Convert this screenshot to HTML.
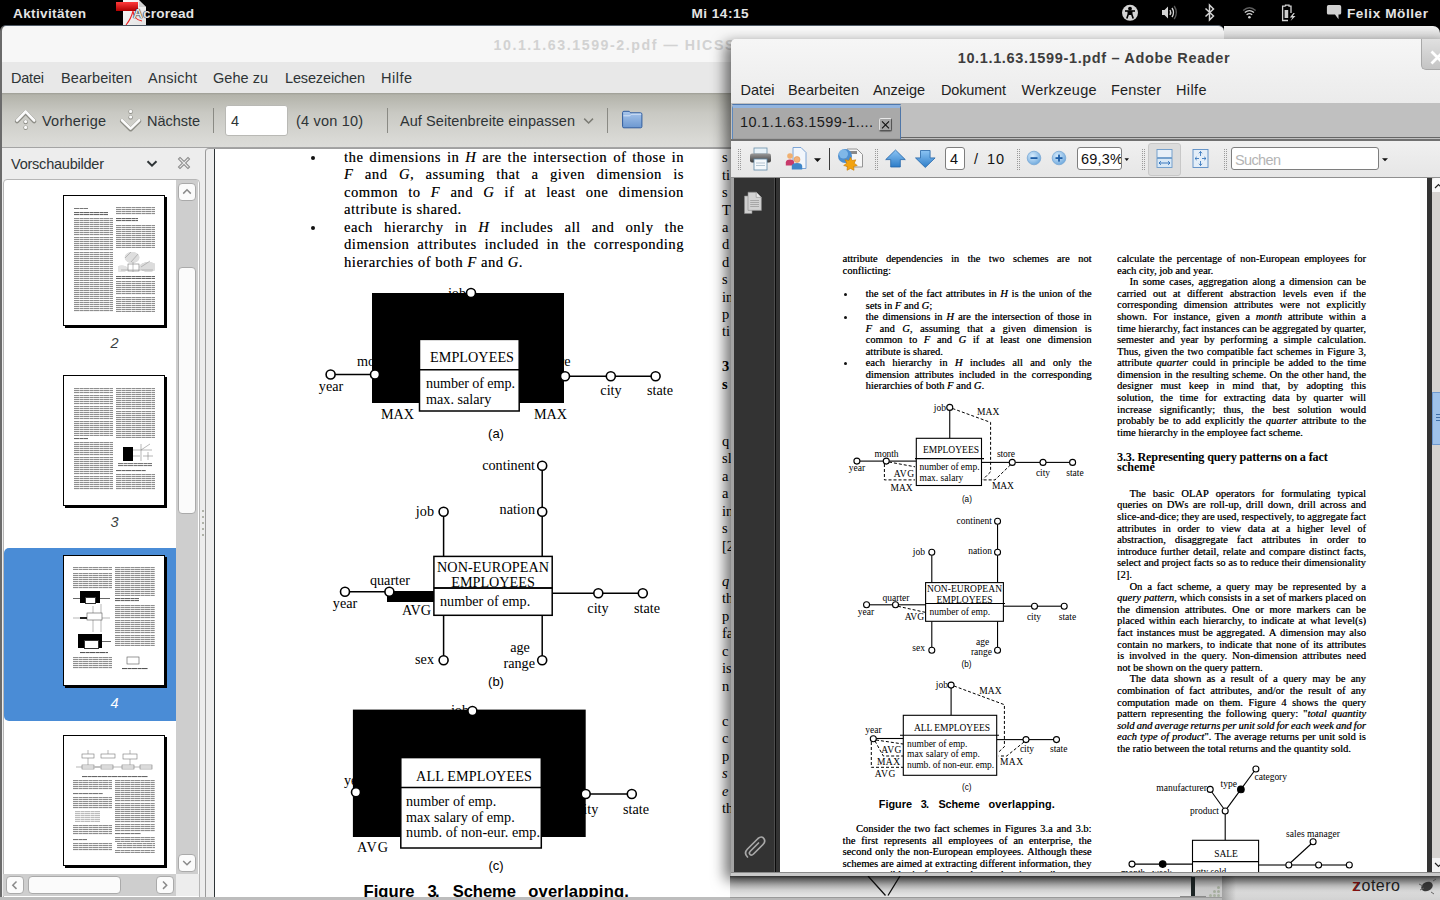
<!DOCTYPE html>
<html><head><meta charset="utf-8"><style>
*{margin:0;padding:0;box-sizing:border-box}
html,body{width:1440px;height:900px;overflow:hidden;background:#000;position:relative}
body div, body svg{position:absolute}
.jl{display:flex;justify-content:space-between;white-space:nowrap}
i{font-style:italic}
</style></head><body>
<div style="left:0px;top:0px;width:1440px;height:26px;background:#000"></div><div style="top:6.69px;font:bold 13.6px/13.6px 'Liberation Sans', sans-serif;color:#e4e4e4;white-space:nowrap;left:13px;letter-spacing:0.347px;">Aktivitäten</div><div style="top:6.69px;font:bold 13.6px/13.6px 'Liberation Sans', sans-serif;color:#e4e4e4;white-space:nowrap;left:691.5px;letter-spacing:0.476px;">Mi 14:15</div><div style="top:6.99px;font:bold 13.6px/13.6px 'Liberation Sans', sans-serif;color:#e4e4e4;white-space:nowrap;left:1347px;letter-spacing:0.562px;">Felix Möller</div><svg style="left:112px;top:0px;" width="36" height="26" viewBox="112 0 36 26">
<defs><linearGradient id="acd" x1="0" y1="0" x2="1" y2="1"><stop offset="0" stop-color="#fafafa"/><stop offset="1" stop-color="#e2e2e2"/></linearGradient>
<linearGradient id="acr" x1="0" y1="0" x2="0" y2="1"><stop offset="0" stop-color="#ff3a3a"/><stop offset="1" stop-color="#b00000"/></linearGradient></defs>
<path d="M123,0 H139 L146,7 V25 H123 Z" fill="url(#acd)"/>
<path d="M139,1 V7 H146" fill="#cfcfcf"/>
<rect x="116" y="2" width="22" height="9" fill="url(#acr)"/>
<path d="M126,25 Q131,19 133,11 Q134,20 142,21" fill="none" stroke="#ee2222" stroke-width="1.1"/>
</svg><div style="top:6.69px;font:bold 13.6px/13.6px 'Liberation Sans', sans-serif;color:#e4e4e4;white-space:nowrap;left:133px;text-shadow:0 0 1px #000,0 0 1px #000;letter-spacing:0.184px;">Acroread</div><svg style="left:1120px;top:3px;" width="20" height="20" viewBox="1120 3 20 20">
<circle cx="1130" cy="12.8" r="8" fill="#d4d4d4"/>
<circle cx="1130" cy="8.6" r="1.9" fill="#000"/>
<path d="M1125,11 H1135" stroke="#000" stroke-width="1.6"/>
<path d="M1128.3,11 V14 L1126.8,18.5 M1131.7,11 V14 L1133.2,18.5" stroke="#000" stroke-width="1.6" fill="none"/>
<rect x="1128.3" y="11" width="3.4" height="4" fill="#000"/>
</svg><svg style="left:1158px;top:4px;" width="22" height="18" viewBox="1158 4 22 18">
<path d="M1162,10 H1164.5 L1168,6.5 V18.5 L1164.5,15 H1162 Z" fill="#d4d4d4"/>
<path d="M1170,10 Q1171.5,12.5 1170,15" stroke="#d4d4d4" stroke-width="1.4" fill="none"/>
<path d="M1172,8 Q1175,12.5 1172,17" stroke="#d4d4d4" stroke-width="1.4" fill="none"/>
<path d="M1174.2,6 Q1178.5,12.5 1174.2,19" stroke="#5a5a5a" stroke-width="1.4" fill="none"/>
</svg><svg style="left:1202px;top:3px;" width="16" height="20" viewBox="1202 3 16 20">
<path d="M1205.5,8.5 L1213.5,16 L1209.5,20 V5 L1213.5,9 L1205.5,16.5" stroke="#d4d4d4" stroke-width="1.5" fill="none"/>
</svg><svg style="left:1240px;top:4px;" width="20" height="18" viewBox="1240 4 20 18">
<circle cx="1249.4" cy="17.3" r="1.3" fill="#d4d4d4"/>
<path d="M1246.6,14.8 Q1249.4,12.6 1252.2,14.8" stroke="#d4d4d4" stroke-width="1.3" fill="none"/>
<path d="M1244.8,12.6 Q1249.4,8.8 1254,12.6" stroke="#d4d4d4" stroke-width="1.3" fill="none"/>
<path d="M1243.2,10.4 Q1249.4,5 1255.6,10.4" stroke="#5e5e5e" stroke-width="1.3" fill="none"/>
</svg><svg style="left:1280px;top:3px;" width="20" height="20" viewBox="1280 3 20 20">
<path d="M1285.5,6.2 V5.2 H1289 V6.2 H1291 V13 M1288,20.5 H1282.6 V6.2 H1285.5" stroke="#d4d4d4" stroke-width="1.3" fill="none"/>
<rect x="1284.6" y="10" width="3.6" height="8" fill="#cfcfcf"/>
<path d="M1293.5,13 L1289.8,17.5 H1292.5 L1290.5,21 L1295.5,16 H1292.8 L1294.8,13 Z" fill="#d4d4d4"/>
</svg><svg style="left:1324px;top:3px;" width="20" height="20" viewBox="1324 3 20 20">
<path d="M1328.5,5 H1339.5 Q1341.2,5 1341.2,6.7 V13 Q1341.2,14.6 1339.5,14.6 H1338.5 L1338.5,19.2 L1335,14.6 H1328.5 Q1326.9,14.6 1326.9,13 V6.7 Q1326.9,5 1328.5,5 Z" fill="#d0d0d0"/>
</svg><div style="left:0px;top:25px;width:1224px;height:875px;background:#f7f7f7;border-radius:6px 6px 0 0;border-left:2px solid #6b6b6b;border-top:1px solid #4f5a66"></div><div style="left:2px;top:62px;width:1222px;height:31px;background:#e8e8e8"></div><div style="top:37.98px;font:bold 14.2px/14.2px 'Liberation Sans', sans-serif;color:#d2d2d2;white-space:nowrap;left:493.5px;letter-spacing:1.563px;">10.1.1.63.1599-2.pdf — HICSS98</div><div style="top:71.23px;font:normal 14.5px/14.5px 'Liberation Sans', sans-serif;color:#2e3436;white-space:nowrap;left:11px;letter-spacing:-0.213px;">Datei</div><div style="top:71.23px;font:normal 14.5px/14.5px 'Liberation Sans', sans-serif;color:#2e3436;white-space:nowrap;left:61px;letter-spacing:0.096px;">Bearbeiten</div><div style="top:71.23px;font:normal 14.5px/14.5px 'Liberation Sans', sans-serif;color:#2e3436;white-space:nowrap;left:148px;letter-spacing:0.242px;">Ansicht</div><div style="top:71.23px;font:normal 14.5px/14.5px 'Liberation Sans', sans-serif;color:#2e3436;white-space:nowrap;left:213px;letter-spacing:0.031px;">Gehe zu</div><div style="top:71.23px;font:normal 14.5px/14.5px 'Liberation Sans', sans-serif;color:#2e3436;white-space:nowrap;left:285px;letter-spacing:-0.142px;">Lesezeichen</div><div style="top:71.23px;font:normal 14.5px/14.5px 'Liberation Sans', sans-serif;color:#2e3436;white-space:nowrap;left:381px;letter-spacing:0.498px;">Hilfe</div><div style="left:2px;top:93px;width:1222px;height:55px;background:linear-gradient(#9d9d95 0px,#b3b3aa 2px,#c9c9c3 20px,#d8d8d4 45px,#dcdcd9 54px);border-bottom:1px solid #a4a4a4"></div><div style="top:113.73px;font:normal 14.5px/14.5px 'Liberation Sans', sans-serif;color:#2e3436;white-space:nowrap;left:42px;letter-spacing:0.241px;">Vorherige</div><div style="top:113.73px;font:normal 14.5px/14.5px 'Liberation Sans', sans-serif;color:#2e3436;white-space:nowrap;left:147px;letter-spacing:-0.032px;">Nächste</div><div style="left:213px;top:108px;width:1px;height:25px;background:#8a8a84"></div><div style="left:225px;top:105px;width:63px;height:31px;background:#fff;border:1px solid #b9b9b5;border-radius:3px"></div><div style="top:113.73px;font:normal 14.5px/14.5px 'Liberation Sans', sans-serif;color:#2e3436;white-space:nowrap;left:231px;letter-spacing:0.000px;">4</div><div style="top:113.73px;font:normal 14.5px/14.5px 'Liberation Sans', sans-serif;color:#2e3436;white-space:nowrap;left:296px;letter-spacing:0.190px;">(4 von 10)</div><div style="left:387px;top:108px;width:1px;height:25px;background:#8a8a84"></div><div style="top:113.73px;font:normal 14.5px/14.5px 'Liberation Sans', sans-serif;color:#2e3436;white-space:nowrap;left:400px;letter-spacing:0.067px;">Auf Seitenbreite einpassen</div><div style="left:607px;top:108px;width:1px;height:25px;background:#8a8a84"></div><div style="left:2px;top:148px;width:204px;height:752px;background:#ededed"></div><div style="top:157.03px;font:normal 14.5px/14.5px 'Liberation Sans', sans-serif;color:#2e3436;white-space:nowrap;left:11px;letter-spacing:-0.225px;">Vorschaubilder</div><div style="left:3px;top:179px;width:197px;height:720px;background:#fff;border:1px solid #b6b6b6;border-radius:4px 4px 0 0"></div><div style="left:205px;top:148px;width:1019px;height:752px;background:#ededed;border-left:1px solid #9a9a9a;border-top:1px solid #a0a0a0;border-radius:4px 0 0 0"></div><div style="left:214px;top:149px;width:1010px;height:748px;background:#fff;border-left:1px solid #2e3436"></div><div style="left:0px;top:897px;width:1224px;height:3px;background:#bdbdbd"></div><div style="left:1224px;top:26px;width:216px;height:14px;background:linear-gradient(#f0f0f0,#d9d9d9);border-radius:0 7px 0 0"></div><svg style="left:12px;top:104px;" width="30" height="30" viewBox="12 104 30 30">
<path d="M17,120.5 L25.6,111.5 L34.2,120.5" stroke="#8d8d86" stroke-width="4.2" fill="none" stroke-linecap="round" stroke-linejoin="round" transform="translate(0,0.8)"/>
<path d="M17,120.5 L25.6,111.5 L34.2,120.5" stroke="#fbfbfb" stroke-width="2.6" fill="none" stroke-linecap="round" stroke-linejoin="round"/>
<circle cx="25.6" cy="122" r="2.2" fill="#8d8d86"/><circle cx="25.6" cy="121.6" r="1.6" fill="#fbfbfb"/>
<circle cx="25.6" cy="127.8" r="2.2" fill="#8d8d86"/><circle cx="25.6" cy="127.4" r="1.6" fill="#fbfbfb"/>
</svg><svg style="left:117px;top:104px;" width="30" height="30" viewBox="117 104 30 30">
<path d="M122,120.2 L130.6,128.6 L139.2,120.2" stroke="#8d8d86" stroke-width="4.2" fill="none" stroke-linecap="round" stroke-linejoin="round" transform="translate(0,0.8)"/>
<path d="M122,120.2 L130.6,128.6 L139.2,120.2" stroke="#fbfbfb" stroke-width="2.6" fill="none" stroke-linecap="round" stroke-linejoin="round"/>
<circle cx="130.6" cy="111.8" r="2.2" fill="#8d8d86"/><circle cx="130.6" cy="111.4" r="1.6" fill="#fbfbfb"/>
<circle cx="130.6" cy="117.4" r="2.2" fill="#8d8d86"/><circle cx="130.6" cy="117" r="1.6" fill="#fbfbfb"/>
</svg><svg style="left:580px;top:112px;" width="18" height="16" viewBox="580 112 18 16"><path d="M584.2,118.6 L588.6,123 L593,118.6" stroke="#7b7b74" stroke-width="1.5" fill="none"/></svg><svg style="left:618px;top:108px;" width="28" height="24" viewBox="618 108 28 24">
<defs><linearGradient id="fld" x1="0" y1="0" x2="0" y2="1"><stop offset="0" stop-color="#a9c6ec"/><stop offset="1" stop-color="#6c98d0"/></linearGradient></defs>
<path d="M622.6,112.6 Q622.6,111.3 623.9,111.3 H629.2 L630.6,112.8 H640.6 Q641.9,112.8 641.9,114.1 V126.6 Q641.9,127.8 640.6,127.8 H623.9 Q622.6,127.8 622.6,126.6 Z" fill="url(#fld)" stroke="#2f5c9e" stroke-width="1"/>
<path d="M623.4,115.8 H629.8 L631.4,114.2 H641.2" stroke="#dbe8f8" stroke-width="0.9" fill="none"/>
</svg><svg style="left:144px;top:156px;" width="16" height="14" viewBox="144 156 16 14"><path d="M147.5,161.2 L152,165.6 L156.5,161.2" stroke="#2e3436" stroke-width="2" fill="none"/></svg><svg style="left:176px;top:155px;" width="16" height="16" viewBox="176 155 16 16">
<path d="M180,159 L188,167 M188,159 L180,167" stroke="#8a8a8a" stroke-width="3.2" stroke-linecap="square"/>
<path d="M180,159 L188,167 M188,159 L180,167" stroke="#e9e9e9" stroke-width="1.2" stroke-linecap="square"/>
</svg><div style="left:0;top:0;width:1440px;height:900px;clip-path:inset(149px 216px 3px 215px)"><div class="jl" style="left:344px;top:150.06px;width:340px;font:14.5px/14.5px 'Liberation Serif', serif;color:#000;letter-spacing:0.55px;text-shadow:0.3px 0 0 rgba(0,0,0,0.5);"><span>the</span><span>dimensions</span><span>in</span><span><i>H</i></span><span>are</span><span>the</span><span>intersection</span><span>of</span><span>those</span><span>in</span></div><div class="jl" style="left:344px;top:167.48px;width:340px;font:14.5px/14.5px 'Liberation Serif', serif;color:#000;letter-spacing:0.55px;text-shadow:0.3px 0 0 rgba(0,0,0,0.5);"><span><i>F</i></span><span>and</span><span><i>G</i>,</span><span>assuming</span><span>that</span><span>a</span><span>given</span><span>dimension</span><span>is</span></div><div class="jl" style="left:344px;top:184.90px;width:340px;font:14.5px/14.5px 'Liberation Serif', serif;color:#000;letter-spacing:0.55px;text-shadow:0.3px 0 0 rgba(0,0,0,0.5);"><span>common</span><span>to</span><span><i>F</i></span><span>and</span><span><i>G</i></span><span>if</span><span>at</span><span>least</span><span>one</span><span>dimension</span></div><div style="left:344px;top:202.32px;font:normal 14.5px/14.5px 'Liberation Serif', serif;color:#000;white-space:nowrap;letter-spacing:0.55px;text-shadow:0.3px 0 0 rgba(0,0,0,0.5);">attribute is shared.</div><div class="jl" style="left:344px;top:219.74px;width:340px;font:14.5px/14.5px 'Liberation Serif', serif;color:#000;letter-spacing:0.55px;text-shadow:0.3px 0 0 rgba(0,0,0,0.5);"><span>each</span><span>hierarchy</span><span>in</span><span><i>H</i></span><span>includes</span><span>all</span><span>and</span><span>only</span><span>the</span></div><div class="jl" style="left:344px;top:237.16px;width:340px;font:14.5px/14.5px 'Liberation Serif', serif;color:#000;letter-spacing:0.55px;text-shadow:0.3px 0 0 rgba(0,0,0,0.5);"><span>dimension</span><span>attributes</span><span>included</span><span>in</span><span>the</span><span>corresponding</span></div><div style="left:344px;top:254.58px;font:normal 14.5px/14.5px 'Liberation Serif', serif;color:#000;white-space:nowrap;letter-spacing:0.55px;text-shadow:0.3px 0 0 rgba(0,0,0,0.5);">hierarchies of both <i>F</i> and <i>G</i>.</div><div style="left:311px;top:156.2px;width:4px;height:4px;background:#111;border-radius:50%"></div><div style="left:311px;top:225.9px;width:4px;height:4px;background:#111;border-radius:50%"></div><svg style="left:215px;top:149px" width="1009" height="748" viewBox="215 149 1009 748"><text x="457" y="298" font-family="Liberation Serif" font-size="14.2" font-weight="normal" text-anchor="middle" fill="#000" style="">job</text><text x="357" y="366" font-family="Liberation Serif" font-size="14.2" font-weight="normal" text-anchor="start" fill="#000" style="">month</text><text x="543" y="366" font-family="Liberation Serif" font-size="14.2" font-weight="normal" text-anchor="start" fill="#000" style="">store</text><rect x="372" y="293" width="192" height="110" fill="#000" stroke="#000" stroke-width="0"/><line x1="335" y1="374.5" x2="371" y2="374.5" stroke="#000" stroke-width="1.5"/><line x1="570" y1="376.3" x2="606" y2="376.3" stroke="#000" stroke-width="1.5"/><line x1="615" y1="376.3" x2="651" y2="376.3" stroke="#000" stroke-width="1.5"/><circle cx="471" cy="293" r="4.5" fill="#fff" stroke="#000" stroke-width="1.6"/><circle cx="375" cy="374.5" r="4.5" fill="#fff" stroke="#000" stroke-width="1.6"/><circle cx="330.6" cy="374.5" r="4.5" fill="#fff" stroke="#000" stroke-width="1.6"/><circle cx="565" cy="376.3" r="4.5" fill="#fff" stroke="#000" stroke-width="1.6"/><circle cx="610.8" cy="376.3" r="4.5" fill="#fff" stroke="#000" stroke-width="1.6"/><circle cx="655.6" cy="376.3" r="4.5" fill="#fff" stroke="#000" stroke-width="1.6"/><rect x="419.5" y="339.4" width="99.7" height="71.6" fill="#fff" stroke="#000" stroke-width="1.5"/><line x1="419.5" y1="369.7" x2="519.2" y2="369.7" stroke="#000" stroke-width="1.5"/><text x="430" y="362.3" font-family="Liberation Serif" font-size="14.2" font-weight="normal" text-anchor="start" fill="#000" textLength="84" lengthAdjust="spacing" style="">EMPLOYEES</text><text x="426" y="387.6" font-family="Liberation Serif" font-size="14.2" font-weight="normal" text-anchor="start" fill="#000" textLength="89" lengthAdjust="spacing" style="">number of emp.</text><text x="426" y="403.5" font-family="Liberation Serif" font-size="14.2" font-weight="normal" text-anchor="start" fill="#000" style="">max. salary</text><text x="331" y="391" font-family="Liberation Serif" font-size="14.2" font-weight="normal" text-anchor="middle" fill="#000" style="">year</text><text x="611" y="395.3" font-family="Liberation Serif" font-size="14.2" font-weight="normal" text-anchor="middle" fill="#000" style="">city</text><text x="660" y="395.3" font-family="Liberation Serif" font-size="14.2" font-weight="normal" text-anchor="middle" fill="#000" style="">state</text><text x="381" y="418.5" font-family="Liberation Serif" font-size="14.2" font-weight="normal" text-anchor="start" fill="#000" textLength="33" lengthAdjust="spacing" style="">MAX</text><text x="534" y="418.5" font-family="Liberation Serif" font-size="14.2" font-weight="normal" text-anchor="start" fill="#000" textLength="33" lengthAdjust="spacing" style="">MAX</text><text x="496" y="438" font-family="Liberation Sans" font-size="13" font-weight="normal" text-anchor="middle" fill="#000" style="">(a)</text><line x1="542.2" y1="470" x2="542.2" y2="556.4" stroke="#000" stroke-width="1.5"/><line x1="443.6" y1="516" x2="443.6" y2="556.4" stroke="#000" stroke-width="1.5"/><line x1="443.6" y1="615.3" x2="443.6" y2="656" stroke="#000" stroke-width="1.5"/><line x1="542.2" y1="615.3" x2="542.2" y2="656" stroke="#000" stroke-width="1.5"/><line x1="349.5" y1="591.7" x2="385" y2="591.7" stroke="#000" stroke-width="1.5"/><line x1="552.2" y1="593.3" x2="594" y2="593.3" stroke="#000" stroke-width="1.5"/><line x1="602.8" y1="593.3" x2="638.3" y2="593.3" stroke="#000" stroke-width="1.5"/><rect x="387" y="591" width="47" height="11" fill="#000"/><rect x="433.9" y="556.4" width="118.3" height="58.9" fill="#fff" stroke="#000" stroke-width="1.5"/><line x1="433.9" y1="588" x2="552.2" y2="588" stroke="#000" stroke-width="1.5"/><circle cx="542.2" cy="465.8" r="4.5" fill="#fff" stroke="#000" stroke-width="1.6"/><circle cx="542.2" cy="511.7" r="4.5" fill="#fff" stroke="#000" stroke-width="1.6"/><circle cx="443.6" cy="511.7" r="4.5" fill="#fff" stroke="#000" stroke-width="1.6"/><circle cx="443.6" cy="660.3" r="4.5" fill="#fff" stroke="#000" stroke-width="1.6"/><circle cx="542.2" cy="660.3" r="4.5" fill="#fff" stroke="#000" stroke-width="1.6"/><circle cx="345" cy="591.7" r="4.5" fill="#fff" stroke="#000" stroke-width="1.6"/><circle cx="389.4" cy="591.7" r="4.5" fill="#fff" stroke="#000" stroke-width="1.6"/><circle cx="598.3" cy="593.3" r="4.5" fill="#fff" stroke="#000" stroke-width="1.6"/><circle cx="642.8" cy="593.3" r="4.5" fill="#fff" stroke="#000" stroke-width="1.6"/><text x="535" y="470" font-family="Liberation Serif" font-size="14.2" font-weight="normal" text-anchor="end" fill="#000" style="">continent</text><text x="434" y="516" font-family="Liberation Serif" font-size="14.2" font-weight="normal" text-anchor="end" fill="#000" style="">job</text><text x="535" y="514" font-family="Liberation Serif" font-size="14.2" font-weight="normal" text-anchor="end" fill="#000" style="">nation</text><text x="390" y="584.5" font-family="Liberation Serif" font-size="14.2" font-weight="normal" text-anchor="middle" fill="#000" style="">quarter</text><text x="345" y="608" font-family="Liberation Serif" font-size="14.2" font-weight="normal" text-anchor="middle" fill="#000" style="">year</text><text x="431" y="615" font-family="Liberation Serif" font-size="14.2" font-weight="normal" text-anchor="end" fill="#000" style="">AVG</text><text x="493" y="572" font-family="Liberation Serif" font-size="14.2" font-weight="normal" text-anchor="middle" fill="#000" textLength="112" lengthAdjust="spacing" style="">NON-EUROPEAN</text><text x="493" y="587" font-family="Liberation Serif" font-size="14.2" font-weight="normal" text-anchor="middle" fill="#000" style="">EMPLOYEES</text><text x="440" y="606" font-family="Liberation Serif" font-size="14.2" font-weight="normal" text-anchor="start" fill="#000" style="">number of emp.</text><text x="598" y="613" font-family="Liberation Serif" font-size="14.2" font-weight="normal" text-anchor="middle" fill="#000" style="">city</text><text x="647" y="613" font-family="Liberation Serif" font-size="14.2" font-weight="normal" text-anchor="middle" fill="#000" style="">state</text><text x="434" y="664" font-family="Liberation Serif" font-size="14.2" font-weight="normal" text-anchor="end" fill="#000" style="">sex</text><text x="520" y="652" font-family="Liberation Serif" font-size="14.2" font-weight="normal" text-anchor="middle" fill="#000" style="">age</text><text x="535" y="668" font-family="Liberation Serif" font-size="14.2" font-weight="normal" text-anchor="end" fill="#000" style="">range</text><text x="496" y="685.5" font-family="Liberation Sans" font-size="13" font-weight="normal" text-anchor="middle" fill="#000" style="">(b)</text><line x1="433.9" y1="588" x2="552.2" y2="588" stroke="#000" stroke-width="1.5"/><text x="460" y="715" font-family="Liberation Serif" font-size="14.2" font-weight="normal" text-anchor="middle" fill="#000" style="">job</text><text x="344" y="785" font-family="Liberation Serif" font-size="14.2" font-weight="normal" text-anchor="start" fill="#000" style="">year</text><text x="577" y="814" font-family="Liberation Serif" font-size="14.2" font-weight="normal" text-anchor="start" fill="#000" style="">city</text><rect x="352.9" y="709.6" width="232.8" height="127.4" fill="#000" stroke="#000" stroke-width="0"/><line x1="590.2" y1="794" x2="627.3" y2="794" stroke="#000" stroke-width="1.5"/><circle cx="472.4" cy="711" r="4.5" fill="#fff" stroke="#000" stroke-width="1.6"/><circle cx="356" cy="792.3" r="4.5" fill="#fff" stroke="#000" stroke-width="1.6"/><circle cx="585.7" cy="794" r="4.5" fill="#fff" stroke="#000" stroke-width="1.6"/><circle cx="631.8" cy="794" r="4.5" fill="#fff" stroke="#000" stroke-width="1.6"/><rect x="400.8" y="757.6" width="140.5" height="90.4" fill="#fff" stroke="#000" stroke-width="1.5"/><line x1="400.8" y1="787.6" x2="541.3" y2="787.6" stroke="#000" stroke-width="1.5"/><text x="416" y="780.5" font-family="Liberation Serif" font-size="14.2" font-weight="normal" text-anchor="start" fill="#000" textLength="116" lengthAdjust="spacing" style="">ALL EMPLOYEES</text><text x="406" y="806" font-family="Liberation Serif" font-size="14.2" font-weight="normal" text-anchor="start" fill="#000" style="">number of emp.</text><text x="406" y="821.5" font-family="Liberation Serif" font-size="14.2" font-weight="normal" text-anchor="start" fill="#000" style="">max salary of emp.</text><text x="406" y="837" font-family="Liberation Serif" font-size="14.2" font-weight="normal" text-anchor="start" fill="#000" textLength="134" lengthAdjust="spacing" style="">numb. of non-eur. emp.</text><text x="623" y="814" font-family="Liberation Serif" font-size="14.2" font-weight="normal" text-anchor="start" fill="#000" textLength="26" lengthAdjust="spacing" style="">state</text><text x="357" y="852" font-family="Liberation Serif" font-size="14.2" font-weight="normal" text-anchor="start" fill="#000" textLength="31" lengthAdjust="spacing" style="">AVG</text><text x="496" y="869.5" font-family="Liberation Sans" font-size="13" font-weight="normal" text-anchor="middle" fill="#000" style="">(c)</text><text x="363.5" y="896.5" font-family="Liberation Sans" font-size="16.6" font-weight="bold" text-anchor="start" fill="#000" textLength="51" lengthAdjust="spacing" style="">Figure</text><text x="427.5" y="896.5" font-family="Liberation Sans" font-size="16.6" font-weight="bold" text-anchor="start" fill="#000" textLength="12" lengthAdjust="spacing" style="">3.</text><text x="452.7" y="896.5" font-family="Liberation Sans" font-size="16.6" font-weight="bold" text-anchor="start" fill="#000" textLength="63.3" lengthAdjust="spacing" style="">Scheme</text><text x="528.2" y="896.5" font-family="Liberation Sans" font-size="16.6" font-weight="bold" text-anchor="start" fill="#000" textLength="100.7" lengthAdjust="spacing" style="">overlapping.</text><text x="722" y="162.2" font-family="Liberation Serif" font-size="14.5" font-weight="normal" text-anchor="start" fill="#000" style="">s</text><text x="722" y="179.6" font-family="Liberation Serif" font-size="14.5" font-weight="normal" text-anchor="start" fill="#000" style="">ti</text><text x="722" y="197" font-family="Liberation Serif" font-size="14.5" font-weight="normal" text-anchor="start" fill="#000" style="">s</text><text x="722" y="214.5" font-family="Liberation Serif" font-size="14.5" font-weight="normal" text-anchor="start" fill="#000" style="">T</text><text x="722" y="231.9" font-family="Liberation Serif" font-size="14.5" font-weight="normal" text-anchor="start" fill="#000" style="">a</text><text x="722" y="249.3" font-family="Liberation Serif" font-size="14.5" font-weight="normal" text-anchor="start" fill="#000" style="">d</text><text x="722" y="266.7" font-family="Liberation Serif" font-size="14.5" font-weight="normal" text-anchor="start" fill="#000" style="">d</text><text x="722" y="284.1" font-family="Liberation Serif" font-size="14.5" font-weight="normal" text-anchor="start" fill="#000" style="">s</text><text x="722" y="301.5" font-family="Liberation Serif" font-size="14.5" font-weight="normal" text-anchor="start" fill="#000" style="">in</text><text x="722" y="319" font-family="Liberation Serif" font-size="14.5" font-weight="normal" text-anchor="start" fill="#000" style="">p</text><text x="722" y="336.4" font-family="Liberation Serif" font-size="14.5" font-weight="normal" text-anchor="start" fill="#000" style="">ti</text><text x="722" y="371" font-family="Liberation Serif" font-size="14.5" font-weight="bold" text-anchor="start" fill="#000" style="">3</text><text x="722" y="388.6" font-family="Liberation Serif" font-size="14.5" font-weight="bold" text-anchor="start" fill="#000" style="">s</text><text x="722" y="446.0" font-family="Liberation Serif" font-size="14.5" font-weight="normal" text-anchor="start" fill="#000" style="">q</text><text x="722" y="463.42" font-family="Liberation Serif" font-size="14.5" font-weight="normal" text-anchor="start" fill="#000" style="">sl</text><text x="722" y="480.84000000000003" font-family="Liberation Serif" font-size="14.5" font-weight="normal" text-anchor="start" fill="#000" style="">a</text><text x="722" y="498.26" font-family="Liberation Serif" font-size="14.5" font-weight="normal" text-anchor="start" fill="#000" style="">a</text><text x="722" y="515.6800000000001" font-family="Liberation Serif" font-size="14.5" font-weight="normal" text-anchor="start" fill="#000" style="">in</text><text x="722" y="533.1" font-family="Liberation Serif" font-size="14.5" font-weight="normal" text-anchor="start" fill="#000" style="">s</text><text x="722" y="550.52" font-family="Liberation Serif" font-size="14.5" font-weight="normal" text-anchor="start" fill="#000" style="">[2</text><text x="722" y="586.0" font-family="Liberation Serif" font-size="14.5" font-weight="normal" text-anchor="start" fill="#000" style="font-style:italic">q</text><text x="722" y="603.42" font-family="Liberation Serif" font-size="14.5" font-weight="normal" text-anchor="start" fill="#000" style="">th</text><text x="722" y="620.84" font-family="Liberation Serif" font-size="14.5" font-weight="normal" text-anchor="start" fill="#000" style="">p</text><text x="722" y="638.26" font-family="Liberation Serif" font-size="14.5" font-weight="normal" text-anchor="start" fill="#000" style="">fa</text><text x="722" y="655.6800000000001" font-family="Liberation Serif" font-size="14.5" font-weight="normal" text-anchor="start" fill="#000" style="">c</text><text x="722" y="673.1" font-family="Liberation Serif" font-size="14.5" font-weight="normal" text-anchor="start" fill="#000" style="">is</text><text x="722" y="690.52" font-family="Liberation Serif" font-size="14.5" font-weight="normal" text-anchor="start" fill="#000" style="">n</text><text x="722" y="726.0" font-family="Liberation Serif" font-size="14.5" font-weight="normal" text-anchor="start" fill="#000" style="">c</text><text x="722" y="743.42" font-family="Liberation Serif" font-size="14.5" font-weight="normal" text-anchor="start" fill="#000" style="">c</text><text x="722" y="760.84" font-family="Liberation Serif" font-size="14.5" font-weight="normal" text-anchor="start" fill="#000" style="">p</text><text x="722" y="778.26" font-family="Liberation Serif" font-size="14.5" font-weight="normal" text-anchor="start" fill="#000" style="font-style:italic">s</text><text x="722" y="795.6800000000001" font-family="Liberation Serif" font-size="14.5" font-weight="normal" text-anchor="start" fill="#000" style="font-style:italic">e</text><text x="722" y="813.1" font-family="Liberation Serif" font-size="14.5" font-weight="normal" text-anchor="start" fill="#000" style="">th</text></svg></div><div style="left:0;top:0;width:1440px;height:900px;clip-path:inset(180px 1264px 26px 4px)"><div style="left:4px;top:548px;width:172px;height:173px;background:#4a8cd6;border-radius:5px 0 0 5px"></div><div style="left:65px;top:197px;width:102px;height:131px;background:#000"></div><div style="left:63px;top:195px;width:102px;height:131px;background:#fff;border:1px solid #000"></div><div style="left:74px;top:207.5px;width:14px;height:1.5px;background:repeating-linear-gradient(90deg,transparent 0 5px,rgba(255,255,255,0.45) 5px 6px,transparent 6px 9px,rgba(255,255,255,0.3) 9px 10px),repeating-linear-gradient(#777 0 1px,#f2f2f2 1px 2px)"></div><div style="left:74px;top:211.5px;width:34px;height:4px;background:repeating-linear-gradient(90deg,transparent 0 5px,rgba(255,255,255,0.45) 5px 6px,transparent 6px 9px,rgba(255,255,255,0.3) 9px 10px),repeating-linear-gradient(#666 0 1px,#f2f2f2 1px 2px)"></div><div style="left:74px;top:218px;width:39px;height:18px;background:repeating-linear-gradient(90deg,transparent 0 5px,rgba(255,255,255,0.45) 5px 6px,transparent 6px 9px,rgba(255,255,255,0.3) 9px 10px),repeating-linear-gradient(#8e8e8e 0 1px,#f2f2f2 1px 2px)"></div><div style="left:74px;top:237px;width:39px;height:14px;background:repeating-linear-gradient(90deg,transparent 0 5px,rgba(255,255,255,0.45) 5px 6px,transparent 6px 9px,rgba(255,255,255,0.3) 9px 10px),repeating-linear-gradient(#8e8e8e 0 1px,#f2f2f2 1px 2px)"></div><div style="left:74px;top:252px;width:39px;height:13px;background:repeating-linear-gradient(90deg,transparent 0 5px,rgba(255,255,255,0.45) 5px 6px,transparent 6px 9px,rgba(255,255,255,0.3) 9px 10px),repeating-linear-gradient(#8e8e8e 0 1px,#f2f2f2 1px 2px)"></div><div style="left:74px;top:266px;width:39px;height:15px;background:repeating-linear-gradient(90deg,transparent 0 5px,rgba(255,255,255,0.45) 5px 6px,transparent 6px 9px,rgba(255,255,255,0.3) 9px 10px),repeating-linear-gradient(#8e8e8e 0 1px,#f2f2f2 1px 2px)"></div><div style="left:74px;top:282px;width:39px;height:17px;background:repeating-linear-gradient(90deg,transparent 0 5px,rgba(255,255,255,0.45) 5px 6px,transparent 6px 9px,rgba(255,255,255,0.3) 9px 10px),repeating-linear-gradient(#8e8e8e 0 1px,#f2f2f2 1px 2px)"></div><div style="left:74px;top:300px;width:39px;height:12px;background:repeating-linear-gradient(90deg,transparent 0 5px,rgba(255,255,255,0.45) 5px 6px,transparent 6px 9px,rgba(255,255,255,0.3) 9px 10px),repeating-linear-gradient(#8e8e8e 0 1px,#f2f2f2 1px 2px)"></div><div style="left:116px;top:207px;width:39px;height:8px;background:repeating-linear-gradient(90deg,transparent 0 5px,rgba(255,255,255,0.45) 5px 6px,transparent 6px 9px,rgba(255,255,255,0.3) 9px 10px),repeating-linear-gradient(#8e8e8e 0 1px,#f2f2f2 1px 2px)"></div><div style="left:116px;top:218px;width:22px;height:4px;background:repeating-linear-gradient(90deg,transparent 0 5px,rgba(255,255,255,0.45) 5px 6px,transparent 6px 9px,rgba(255,255,255,0.3) 9px 10px),repeating-linear-gradient(#666 0 1px,#f2f2f2 1px 2px)"></div><div style="left:116px;top:225px;width:39px;height:23px;background:repeating-linear-gradient(90deg,transparent 0 5px,rgba(255,255,255,0.45) 5px 6px,transparent 6px 9px,rgba(255,255,255,0.3) 9px 10px),repeating-linear-gradient(#8e8e8e 0 1px,#f2f2f2 1px 2px)"></div><div style="left:118px;top:250px;width:37px;height:25px;background:radial-gradient(ellipse at 38% 30%,#dedede 0 22%,transparent 24%),radial-gradient(ellipse at 82% 68%,#dcdcdc 0 20%,transparent 22%),radial-gradient(ellipse at 10% 75%,#e2e2e2 0 12%,transparent 14%)"></div><svg style="left:116px;top:249px;" width="40" height="28" viewBox="116 249 40 28"><path d="M125,258 L131,252 M131,262 L138,254 M121,270 H153 M133,262 V272 M141,267 L150,261" stroke="#999" stroke-width="0.6" fill="none"/><rect x="128" y="264" width="11" height="7" fill="none" stroke="#777" stroke-width="0.6"/></svg><div style="left:116px;top:276px;width:39px;height:3px;background:repeating-linear-gradient(90deg,transparent 0 5px,rgba(255,255,255,0.45) 5px 6px,transparent 6px 9px,rgba(255,255,255,0.3) 9px 10px),repeating-linear-gradient(#666 0 1px,#f2f2f2 1px 2px)"></div><div style="left:116px;top:281px;width:39px;height:14px;background:repeating-linear-gradient(90deg,transparent 0 5px,rgba(255,255,255,0.45) 5px 6px,transparent 6px 9px,rgba(255,255,255,0.3) 9px 10px),repeating-linear-gradient(#8e8e8e 0 1px,#f2f2f2 1px 2px)"></div><div style="left:116px;top:297px;width:39px;height:15px;background:repeating-linear-gradient(90deg,transparent 0 5px,rgba(255,255,255,0.45) 5px 6px,transparent 6px 9px,rgba(255,255,255,0.3) 9px 10px),repeating-linear-gradient(#8e8e8e 0 1px,#f2f2f2 1px 2px)"></div><div style="left:65px;top:377px;width:102px;height:131px;background:#000"></div><div style="left:63px;top:375px;width:102px;height:131px;background:#fff;border:1px solid #000"></div><div style="left:74px;top:387.5px;width:39px;height:6px;background:repeating-linear-gradient(90deg,transparent 0 5px,rgba(255,255,255,0.45) 5px 6px,transparent 6px 9px,rgba(255,255,255,0.3) 9px 10px),repeating-linear-gradient(#8e8e8e 0 1px,#f2f2f2 1px 2px)"></div><div style="left:74px;top:395px;width:39px;height:10px;background:repeating-linear-gradient(90deg,transparent 0 5px,rgba(255,255,255,0.45) 5px 6px,transparent 6px 9px,rgba(255,255,255,0.3) 9px 10px),repeating-linear-gradient(#8e8e8e 0 1px,#f2f2f2 1px 2px)"></div><div style="left:74px;top:406px;width:39px;height:14px;background:repeating-linear-gradient(90deg,transparent 0 5px,rgba(255,255,255,0.45) 5px 6px,transparent 6px 9px,rgba(255,255,255,0.3) 9px 10px),repeating-linear-gradient(#8e8e8e 0 1px,#f2f2f2 1px 2px)"></div><div style="left:74px;top:421px;width:39px;height:15px;background:repeating-linear-gradient(90deg,transparent 0 5px,rgba(255,255,255,0.45) 5px 6px,transparent 6px 9px,rgba(255,255,255,0.3) 9px 10px),repeating-linear-gradient(#8e8e8e 0 1px,#f2f2f2 1px 2px)"></div><div style="left:74px;top:438px;width:14px;height:2px;background:repeating-linear-gradient(90deg,transparent 0 5px,rgba(255,255,255,0.45) 5px 6px,transparent 6px 9px,rgba(255,255,255,0.3) 9px 10px),repeating-linear-gradient(#666 0 1px,#f2f2f2 1px 2px)"></div><div style="left:74px;top:442px;width:39px;height:14px;background:repeating-linear-gradient(90deg,transparent 0 5px,rgba(255,255,255,0.45) 5px 6px,transparent 6px 9px,rgba(255,255,255,0.3) 9px 10px),repeating-linear-gradient(#8e8e8e 0 1px,#f2f2f2 1px 2px)"></div><div style="left:74px;top:457px;width:39px;height:18px;background:repeating-linear-gradient(90deg,transparent 0 5px,rgba(255,255,255,0.45) 5px 6px,transparent 6px 9px,rgba(255,255,255,0.3) 9px 10px),repeating-linear-gradient(#8e8e8e 0 1px,#f2f2f2 1px 2px)"></div><div style="left:74px;top:476px;width:39px;height:14px;background:repeating-linear-gradient(90deg,transparent 0 5px,rgba(255,255,255,0.45) 5px 6px,transparent 6px 9px,rgba(255,255,255,0.3) 9px 10px),repeating-linear-gradient(#8e8e8e 0 1px,#f2f2f2 1px 2px)"></div><div style="left:116px;top:387.5px;width:39px;height:22px;background:repeating-linear-gradient(90deg,transparent 0 5px,rgba(255,255,255,0.45) 5px 6px,transparent 6px 9px,rgba(255,255,255,0.3) 9px 10px),repeating-linear-gradient(#8e8e8e 0 1px,#f2f2f2 1px 2px)"></div><div style="left:116px;top:411px;width:39px;height:27px;background:repeating-linear-gradient(90deg,transparent 0 5px,rgba(255,255,255,0.45) 5px 6px,transparent 6px 9px,rgba(255,255,255,0.3) 9px 10px),repeating-linear-gradient(#8e8e8e 0 1px,#f2f2f2 1px 2px)"></div><div style="left:122.8px;top:446.5px;width:10.2px;height:14.2px;background:#000"></div><svg style="left:116px;top:440px;" width="40" height="23" viewBox="116 440 40 23"><path d="M133,450 H152 M133,456 H140 M141,444 V461 M141,450 L150,444 M143,456 H153 M148,452 V460" stroke="#888" stroke-width="0.6" fill="none"/></svg><div style="left:118px;top:463px;width:34px;height:4px;background:repeating-linear-gradient(90deg,transparent 0 5px,rgba(255,255,255,0.45) 5px 6px,transparent 6px 9px,rgba(255,255,255,0.3) 9px 10px),repeating-linear-gradient(#777 0 1px,#f2f2f2 1px 2px)"></div><div style="left:116px;top:470px;width:30px;height:2px;background:repeating-linear-gradient(90deg,transparent 0 5px,rgba(255,255,255,0.45) 5px 6px,transparent 6px 9px,rgba(255,255,255,0.3) 9px 10px),repeating-linear-gradient(#666 0 1px,#f2f2f2 1px 2px)"></div><div style="left:116px;top:474px;width:39px;height:16px;background:repeating-linear-gradient(90deg,transparent 0 5px,rgba(255,255,255,0.45) 5px 6px,transparent 6px 9px,rgba(255,255,255,0.3) 9px 10px),repeating-linear-gradient(#8e8e8e 0 1px,#f2f2f2 1px 2px)"></div><div style="left:65px;top:557px;width:102px;height:131px;background:#000"></div><div style="left:63px;top:555px;width:102px;height:131px;background:#fff;border:1px solid #000"></div><div style="left:73px;top:567px;width:39px;height:3px;background:repeating-linear-gradient(90deg,transparent 0 5px,rgba(255,255,255,0.45) 5px 6px,transparent 6px 9px,rgba(255,255,255,0.3) 9px 10px),repeating-linear-gradient(#8e8e8e 0 1px,#f2f2f2 1px 2px)"></div><div style="left:73px;top:573px;width:39px;height:16px;background:repeating-linear-gradient(90deg,transparent 0 5px,rgba(255,255,255,0.45) 5px 6px,transparent 6px 9px,rgba(255,255,255,0.3) 9px 10px),repeating-linear-gradient(#8e8e8e 0 1px,#f2f2f2 1px 2px)"></div><div style="left:80px;top:591px;width:20px;height:12px;background:#000"></div><div style="left:85px;top:597px;width:11px;height:7px;background:#fff;border:0.6px solid #333"></div><div style="left:73px;top:598px;width:7px;height:0.7px;background:#666"></div><div style="left:100px;top:598px;width:10px;height:0.7px;background:#666"></div><svg style="left:72px;top:604px;" width="42" height="46" viewBox="72 604 42 46"><path d="M73,14 H110 M93,2 V28 M101,0 V28" stroke="#888" stroke-width="0.6" fill="none" transform="translate(0,604)"/><rect x="87" y="613" width="15" height="7" fill="#fff" stroke="#555" stroke-width="0.6"/><rect x="80" y="617" width="7" height="2" fill="#222"/></svg><div style="left:78px;top:634px;width:24px;height:14px;background:#000"></div><div style="left:84px;top:640px;width:15px;height:9px;background:#fff;border:0.6px solid #333"></div><div style="left:102px;top:641px;width:9px;height:0.7px;background:#666"></div><div style="left:80px;top:652px;width:28px;height:2px;background:repeating-linear-gradient(90deg,transparent 0 5px,rgba(255,255,255,0.45) 5px 6px,transparent 6px 9px,rgba(255,255,255,0.3) 9px 10px),repeating-linear-gradient(#555 0 1px,#f2f2f2 1px 2px)"></div><div style="left:73px;top:657px;width:39px;height:12px;background:repeating-linear-gradient(90deg,transparent 0 5px,rgba(255,255,255,0.45) 5px 6px,transparent 6px 9px,rgba(255,255,255,0.3) 9px 10px),repeating-linear-gradient(#8e8e8e 0 1px,#f2f2f2 1px 2px)"></div><div style="left:115px;top:567px;width:40px;height:29px;background:repeating-linear-gradient(90deg,transparent 0 5px,rgba(255,255,255,0.45) 5px 6px,transparent 6px 9px,rgba(255,255,255,0.3) 9px 10px),repeating-linear-gradient(#8e8e8e 0 1px,#f2f2f2 1px 2px)"></div><div style="left:115px;top:598px;width:24px;height:4px;background:repeating-linear-gradient(90deg,transparent 0 5px,rgba(255,255,255,0.45) 5px 6px,transparent 6px 9px,rgba(255,255,255,0.3) 9px 10px),repeating-linear-gradient(#666 0 1px,#f2f2f2 1px 2px)"></div><div style="left:115px;top:605px;width:40px;height:14px;background:repeating-linear-gradient(90deg,transparent 0 5px,rgba(255,255,255,0.45) 5px 6px,transparent 6px 9px,rgba(255,255,255,0.3) 9px 10px),repeating-linear-gradient(#8e8e8e 0 1px,#f2f2f2 1px 2px)"></div><div style="left:115px;top:620px;width:40px;height:14px;background:repeating-linear-gradient(90deg,transparent 0 5px,rgba(255,255,255,0.45) 5px 6px,transparent 6px 9px,rgba(255,255,255,0.3) 9px 10px),repeating-linear-gradient(#8e8e8e 0 1px,#f2f2f2 1px 2px)"></div><div style="left:115px;top:635px;width:40px;height:11px;background:repeating-linear-gradient(90deg,transparent 0 5px,rgba(255,255,255,0.45) 5px 6px,transparent 6px 9px,rgba(255,255,255,0.3) 9px 10px),repeating-linear-gradient(#8e8e8e 0 1px,#f2f2f2 1px 2px)"></div><svg style="left:114px;top:647px;" width="44" height="22" viewBox="114 647 44 22"><path d="M116,14 H155 M133,6 V12 M133,6 L138,1 M144,14 L150,8" stroke="#888" stroke-width="0.6" fill="none"/><rect x="127" y="657" width="12" height="7" fill="#fff" stroke="#555" stroke-width="0.6"/></svg><div style="left:122px;top:668px;width:26px;height:2px;background:repeating-linear-gradient(90deg,transparent 0 5px,rgba(255,255,255,0.45) 5px 6px,transparent 6px 9px,rgba(255,255,255,0.3) 9px 10px),repeating-linear-gradient(#555 0 1px,#f2f2f2 1px 2px)"></div><div style="left:65px;top:737px;width:102px;height:131px;background:#000"></div><div style="left:63px;top:735px;width:102px;height:131px;background:#fff;border:1px solid #000"></div><svg style="left:72px;top:745px;" width="90" height="32" viewBox="72 745 90 32">
<g fill="#fff" stroke="#777" stroke-width="0.6">
<rect x="82" y="754" width="12" height="4"/><rect x="101" y="754" width="14" height="4"/><rect x="123" y="754" width="14" height="5"/>
<rect x="82" y="765" width="12" height="4"/><rect x="101" y="765" width="12" height="4"/><rect x="122" y="765" width="12" height="4"/><rect x="140" y="765" width="12" height="4"/>
</g>
<path d="M88,750 V754 M108,750 V754 M130,750 V754 M88,758 V765 M130,759 V765 M76,767 H152 M95,767 L100,767" stroke="#888" stroke-width="0.6" fill="none"/>
</svg><div style="left:82px;top:776px;width:66px;height:2px;background:repeating-linear-gradient(90deg,transparent 0 5px,rgba(255,255,255,0.45) 5px 6px,transparent 6px 9px,rgba(255,255,255,0.3) 9px 10px),repeating-linear-gradient(#666 0 1px,#f2f2f2 1px 2px)"></div><div style="left:73px;top:780px;width:39px;height:10px;background:repeating-linear-gradient(90deg,transparent 0 5px,rgba(255,255,255,0.45) 5px 6px,transparent 6px 9px,rgba(255,255,255,0.3) 9px 10px),repeating-linear-gradient(#8e8e8e 0 1px,#f2f2f2 1px 2px)"></div><div style="left:73px;top:793px;width:30px;height:2px;background:repeating-linear-gradient(90deg,transparent 0 5px,rgba(255,255,255,0.45) 5px 6px,transparent 6px 9px,rgba(255,255,255,0.3) 9px 10px),repeating-linear-gradient(#777 0 1px,#f2f2f2 1px 2px)"></div><div style="left:73px;top:797px;width:39px;height:12px;background:repeating-linear-gradient(90deg,transparent 0 5px,rgba(255,255,255,0.45) 5px 6px,transparent 6px 9px,rgba(255,255,255,0.3) 9px 10px),repeating-linear-gradient(#8e8e8e 0 1px,#f2f2f2 1px 2px)"></div><div style="left:75px;top:811px;width:25px;height:11px;background:repeating-linear-gradient(90deg,transparent 0 5px,rgba(255,255,255,0.45) 5px 6px,transparent 6px 9px,rgba(255,255,255,0.3) 9px 10px),repeating-linear-gradient(#bbb 0 1px,#f2f2f2 1px 2px)"></div><div style="left:73px;top:825px;width:39px;height:10px;background:repeating-linear-gradient(90deg,transparent 0 5px,rgba(255,255,255,0.45) 5px 6px,transparent 6px 9px,rgba(255,255,255,0.3) 9px 10px),repeating-linear-gradient(#8e8e8e 0 1px,#f2f2f2 1px 2px)"></div><div style="left:73px;top:839px;width:14px;height:2px;background:repeating-linear-gradient(90deg,transparent 0 5px,rgba(255,255,255,0.45) 5px 6px,transparent 6px 9px,rgba(255,255,255,0.3) 9px 10px),repeating-linear-gradient(#777 0 1px,#f2f2f2 1px 2px)"></div><div style="left:73px;top:843px;width:39px;height:8px;background:repeating-linear-gradient(90deg,transparent 0 5px,rgba(255,255,255,0.45) 5px 6px,transparent 6px 9px,rgba(255,255,255,0.3) 9px 10px),repeating-linear-gradient(#8e8e8e 0 1px,#f2f2f2 1px 2px)"></div><div style="left:115px;top:780px;width:40px;height:22px;background:repeating-linear-gradient(90deg,transparent 0 5px,rgba(255,255,255,0.45) 5px 6px,transparent 6px 9px,rgba(255,255,255,0.3) 9px 10px),repeating-linear-gradient(#8e8e8e 0 1px,#f2f2f2 1px 2px)"></div><div style="left:115px;top:803px;width:40px;height:11px;background:repeating-linear-gradient(90deg,transparent 0 5px,rgba(255,255,255,0.45) 5px 6px,transparent 6px 9px,rgba(255,255,255,0.3) 9px 10px),repeating-linear-gradient(#8e8e8e 0 1px,#f2f2f2 1px 2px)"></div><div style="left:115px;top:815px;width:40px;height:8px;background:repeating-linear-gradient(90deg,transparent 0 5px,rgba(255,255,255,0.45) 5px 6px,transparent 6px 9px,rgba(255,255,255,0.3) 9px 10px),repeating-linear-gradient(#8e8e8e 0 1px,#f2f2f2 1px 2px)"></div><div style="left:115px;top:824px;width:40px;height:8px;background:repeating-linear-gradient(90deg,transparent 0 5px,rgba(255,255,255,0.45) 5px 6px,transparent 6px 9px,rgba(255,255,255,0.3) 9px 10px),repeating-linear-gradient(#8e8e8e 0 1px,#f2f2f2 1px 2px)"></div><div style="left:115px;top:833px;width:26px;height:2px;background:repeating-linear-gradient(90deg,transparent 0 5px,rgba(255,255,255,0.45) 5px 6px,transparent 6px 9px,rgba(255,255,255,0.3) 9px 10px),repeating-linear-gradient(#777 0 1px,#f2f2f2 1px 2px)"></div><div style="left:115px;top:837px;width:40px;height:5px;background:repeating-linear-gradient(90deg,transparent 0 5px,rgba(255,255,255,0.45) 5px 6px,transparent 6px 9px,rgba(255,255,255,0.3) 9px 10px),repeating-linear-gradient(#8e8e8e 0 1px,#f2f2f2 1px 2px)"></div><div style="left:117px;top:843px;width:38px;height:6px;background:repeating-linear-gradient(90deg,transparent 0 5px,rgba(255,255,255,0.45) 5px 6px,transparent 6px 9px,rgba(255,255,255,0.3) 9px 10px),repeating-linear-gradient(#8e8e8e 0 1px,#f2f2f2 1px 2px)"></div><div style="left:115px;top:850px;width:40px;height:3px;background:repeating-linear-gradient(90deg,transparent 0 5px,rgba(255,255,255,0.45) 5px 6px,transparent 6px 9px,rgba(255,255,255,0.3) 9px 10px),repeating-linear-gradient(#8e8e8e 0 1px,#f2f2f2 1px 2px)"></div></div><div style="top:335.73px;font:normal 14.5px/14.5px 'Liberation Sans', sans-serif;color:#3a3f41;white-space:nowrap;left:110.5px;font-style:italic;letter-spacing:0.000px;">2</div><div style="top:515.23px;font:normal 14.5px/14.5px 'Liberation Sans', sans-serif;color:#3a3f41;white-space:nowrap;left:110.5px;font-style:italic;letter-spacing:0.000px;">3</div><div style="top:695.53px;font:normal 14.5px/14.5px 'Liberation Sans', sans-serif;color:#fff;white-space:nowrap;left:110.5px;font-style:italic;letter-spacing:0.000px;">4</div><div style="left:176px;top:180px;width:22px;height:694px;background:#cecece"></div><div style="left:178px;top:183px;width:18px;height:18px;background:#fbfbfb;border:1px solid #aaa;border-radius:4px"></div><div style="left:178px;top:267px;width:18px;height:247px;background:#fbfbfb;border:1px solid #aaa;border-radius:4px"></div><div style="left:178px;top:854px;width:18px;height:18px;background:#fbfbfb;border:1px solid #aaa;border-radius:4px"></div><div style="left:3px;top:874px;width:173px;height:22px;background:#cecece"></div><div style="left:176px;top:874px;width:23px;height:22px;background:#ededed"></div><div style="left:6px;top:876px;width:18px;height:18px;background:#fbfbfb;border:1px solid #aaa;border-radius:4px"></div><div style="left:28px;top:876px;width:93px;height:18px;background:#fbfbfb;border:1px solid #aaa;border-radius:4px"></div><div style="left:156px;top:876px;width:18px;height:18px;background:#fbfbfb;border:1px solid #aaa;border-radius:4px"></div><div style="left:201.5px;top:510px;width:2px;height:2px;background:#9a9e90;border-radius:50%"></div><div style="left:201.5px;top:516px;width:2px;height:2px;background:#9a9e90;border-radius:50%"></div><div style="left:201.5px;top:522px;width:2px;height:2px;background:#9a9e90;border-radius:50%"></div><div style="left:201.5px;top:528px;width:2px;height:2px;background:#9a9e90;border-radius:50%"></div><div style="left:201.5px;top:534px;width:2px;height:2px;background:#9a9e90;border-radius:50%"></div><svg style="left:178px;top:183px;" width="18" height="18" viewBox="178 183 18 18"><path d="M183.2,193.6 L187,189.8 L190.8,193.6" stroke="#8a8a8a" stroke-width="1.5" fill="none"/></svg><svg style="left:178px;top:854px;" width="18" height="18" viewBox="178 854 18 18"><path d="M183.2,861 L187,864.8 L190.8,861" stroke="#8a8a8a" stroke-width="1.5" fill="none"/></svg><svg style="left:6px;top:876px;" width="18" height="18" viewBox="6 876 18 18"><path d="M16.5,881.5 L12.8,885.2 L16.5,888.9" stroke="#8a8a8a" stroke-width="1.5" fill="none"/></svg><svg style="left:156px;top:876px;" width="18" height="18" viewBox="156 876 18 18"><path d="M163,881.5 L166.7,885.2 L163,888.9" stroke="#8a8a8a" stroke-width="1.5" fill="none"/></svg><div style="left:730px;top:876px;width:462px;height:21px;background:linear-gradient(#4e4e4e 0px,#8a8a8a 3px,#b9b9b9 8px,#d9d9d9 14px,#e6e6e6 21px)"></div><svg style="left:860px;top:876px;" width="50" height="21" viewBox="860 876 50 21"><path d="M868,876 L885.5,895.5 M900,876 L888,895.5" stroke="#111" stroke-width="1.3"/></svg><div style="left:730px;top:897px;width:492px;height:3px;background:#b8b8b8;border-top:1px solid #9a9a9a"></div><div style="left:1192px;top:876px;width:30px;height:21px;background:linear-gradient(#7a7a7a 0px,#b4b4b4 5px,#d2d2d2 12px,#cacaca 21px)"></div><div style="left:1191px;top:877px;width:4px;height:19px;background:#1e2626"></div><div style="left:1180px;top:896px;width:26px;height:1px;background:#8a8a8a"></div><div style="left:1217px;top:886px;width:3px;height:3px;background:#a9b1a1;border-radius:50%"></div><div style="left:1213px;top:890px;width:3px;height:3px;background:#a9b1a1;border-radius:50%"></div><div style="left:1217px;top:890px;width:3px;height:3px;background:#a9b1a1;border-radius:50%"></div><div style="left:1209px;top:894px;width:3px;height:3px;background:#a9b1a1;border-radius:50%"></div><div style="left:1213px;top:894px;width:3px;height:3px;background:#a9b1a1;border-radius:50%"></div><div style="left:1217px;top:894px;width:3px;height:3px;background:#a9b1a1;border-radius:50%"></div><div style="left:1222px;top:876px;width:218px;height:24px;background:linear-gradient(90deg,rgba(0,0,0,0.25),rgba(0,0,0,0) 14px),linear-gradient(#6a6a6a 0px,#9c9c9c 3px,#cdcdcd 9px,#dddddd 15px,#d2d2d2 24px)"></div><div style="top:878.16px;font:normal 16px/16px 'Liberation Sans', sans-serif;color:#222;white-space:nowrap;left:1353px;letter-spacing:0;letter-spacing:0.506px;">zotero</div><div style="left:1352px;top:878.2px;font:16px/16px 'Liberation Sans',sans-serif;color:#8a1010;white-space:nowrap">z</div><svg style="left:1416px;top:878px;" width="22" height="18" viewBox="1416 878 22 18"><ellipse cx="1427" cy="886.5" rx="6" ry="4.5" fill="#3c3c3c" transform="rotate(-25 1427 886.5)"/><path d="M1419,884 L1423,886 M1420,890 L1424,888 M1433,881 L1436,879 M1431,892 L1434,894" stroke="#666" stroke-width="1"/></svg><div style="left:731px;top:39px;width:720px;height:837px;background:#ededed;border-radius:5px 0 0 0;box-shadow:-6px 4px 14px rgba(0,0,0,0.55)"></div><div style="left:731px;top:39px;width:709px;height:64px;background:linear-gradient(#f6f6f6,#ebebeb);border-radius:5px 0 0 0"></div><div style="top:50.63px;font:bold 14.5px/14.5px 'Liberation Sans', sans-serif;color:#3d3d3d;white-space:nowrap;left:957.7px;letter-spacing:0.644px;">10.1.1.63.1599-1.pdf – Adobe Reader</div><div style="left:1421px;top:39px;width:19px;height:31px;background:linear-gradient(#e0e0e0,#c4c4c4);border-radius:0 0 0 5px;border-left:1px solid #a8a8a8;border-bottom:1px solid #a8a8a8"></div><div style="top:83.33px;font:normal 14.5px/14.5px 'Liberation Sans', sans-serif;color:#1e1e1e;white-space:nowrap;left:740.5px;letter-spacing:0.037px;">Datei</div><div style="top:83.33px;font:normal 14.5px/14.5px 'Liberation Sans', sans-serif;color:#1e1e1e;white-space:nowrap;left:788px;letter-spacing:0.096px;">Bearbeiten</div><div style="top:83.33px;font:normal 14.5px/14.5px 'Liberation Sans', sans-serif;color:#1e1e1e;white-space:nowrap;left:873px;letter-spacing:-0.067px;">Anzeige</div><div style="top:83.33px;font:normal 14.5px/14.5px 'Liberation Sans', sans-serif;color:#1e1e1e;white-space:nowrap;left:941px;letter-spacing:-0.155px;">Dokument</div><div style="top:83.33px;font:normal 14.5px/14.5px 'Liberation Sans', sans-serif;color:#1e1e1e;white-space:nowrap;left:1021.5px;letter-spacing:0.241px;">Werkzeuge</div><div style="top:83.33px;font:normal 14.5px/14.5px 'Liberation Sans', sans-serif;color:#1e1e1e;white-space:nowrap;left:1111px;letter-spacing:0.140px;">Fenster</div><div style="top:83.33px;font:normal 14.5px/14.5px 'Liberation Sans', sans-serif;color:#1e1e1e;white-space:nowrap;left:1176px;letter-spacing:0.373px;">Hilfe</div><div style="left:731px;top:103px;width:709px;height:38px;background:#c0c0c0"></div><div style="left:900px;top:137px;width:540px;height:1px;background:#666"></div><div style="left:732px;top:104px;width:169px;height:35px;background:#a9a9a9;border-top:4px solid #93b5e0;border-left:1px solid #5d88bd;border-right:1px solid #4f76a8;border-radius:4px 4px 0 0;box-shadow:inset 0 -1px 0 #a0a0a0"></div><div style="left:732px;top:104px;width:169px;height:1px;background:#4f78ad;border-radius:4px 4px 0 0"></div><div style="left:731px;top:139px;width:709px;height:2px;background:#707070"></div><div style="top:114.73px;font:normal 14.5px/14.5px 'Liberation Sans', sans-serif;color:#1a1a1a;white-space:nowrap;left:740px;letter-spacing:0.381px;">10.1.1.63.1599-1....</div><div style="left:879px;top:118px;width:13px;height:13px;background:#a4a4a4;border:1px solid #555;border-top-color:#e8e8e8;border-left-color:#e0e0e0;border-radius:2px;box-shadow:0 1px 1px rgba(0,0,0,0.3)"></div><div style="left:731px;top:141px;width:709px;height:37px;background:linear-gradient(#f0f0f0,#e6e6e6);border-bottom:1px solid #8f8f8f"></div><div style="left:945px;top:147px;width:20px;height:23px;background:#fff;border:1px solid #7e7e7e;border-radius:3px"></div><div style="top:152.23px;font:normal 14.5px/14.5px 'Liberation Sans', sans-serif;color:#111;white-space:nowrap;left:950px;letter-spacing:0.000px;">4</div><div style="top:152.23px;font:normal 14.5px/14.5px 'Liberation Sans', sans-serif;color:#111;white-space:nowrap;left:974px;letter-spacing:0.000px;">/</div><div style="top:152.23px;font:normal 14.5px/14.5px 'Liberation Sans', sans-serif;color:#111;white-space:nowrap;left:987px;letter-spacing:0.871px;">10</div><div style="left:1077px;top:147px;width:45px;height:23px;background:#fff;border:1px solid #7e7e7e;border-radius:3px;overflow:hidden"></div><div style="left:0;top:0;width:1440px;height:900px;clip-path:inset(148px 319px 731px 1078px)"><div style="top:152.23px;font:normal 14.5px/14.5px 'Liberation Sans', sans-serif;color:#111;white-space:nowrap;left:1081px;letter-spacing:0.221px;">69,3%</div></div><div style="left:1148px;top:143px;width:33px;height:33px;background:#dcdcdc;border:1px solid #c8c8c8;border-radius:3px"></div><div style="left:1231px;top:147px;width:148px;height:23px;background:#fff;border:1px solid #7e7e7e;border-radius:3px"></div><div style="top:153.03px;font:normal 14.5px/14.5px 'Liberation Sans', sans-serif;color:#b4b4b4;white-space:nowrap;left:1235px;letter-spacing:-0.636px;">Suchen</div><div style="left:734px;top:178px;width:46px;height:694px;background:#333"></div><div style="left:774px;top:178px;width:1px;height:694px;background:#4d4d4d"></div><div style="left:775px;top:178px;width:1px;height:694px;background:#0a0a0a"></div><div style="left:780px;top:178px;width:647px;height:694px;background:#fff"></div><div style="left:1427px;top:178px;width:5px;height:694px;background:#333"></div><div style="left:1432px;top:178px;width:8px;height:694px;background:#d6d3d0"></div><div style="left:1432px;top:178px;width:8px;height:14px;background:#f8f8f8;border-top-left-radius:3px"></div><div style="left:1432px;top:392px;width:8px;height:53px;background:#9fc2ea;border:1px solid #6f9ad0;border-right:none"></div><div style="left:1432px;top:858px;width:8px;height:14px;background:#f4f4f4"></div><svg style="left:1432px;top:858px;" width="8" height="14" viewBox="1432 858 8 14"><path d="M1435,863 L1438.5,866.5 L1442,863" stroke="#222" stroke-width="1.2" fill="none"/></svg><svg style="left:1432px;top:178px;" width="8" height="14" viewBox="1432 178 8 14"><path d="M1435,188 L1438.5,184.5 L1442,188" stroke="#222" stroke-width="1.2" fill="none"/></svg><div style="left:1436px;top:414px;width:4px;height:1px;background:#3f6fa8"></div><div style="left:1436px;top:417px;width:4px;height:1px;background:#3f6fa8"></div><div style="left:1436px;top:420px;width:4px;height:1px;background:#3f6fa8"></div><div style="left:731px;top:872px;width:709px;height:4px;background:#c9c9c9;border-top:1px solid #8a8a8a"></div><div style="left:731px;top:178px;width:3px;height:694px;background:#a3a3a3"></div><svg style="left:738px;top:149px;" width="4" height="21" viewBox="738 149 4 21"><rect x="738" y="149" width="1" height="1" fill="#9a9a9a"/><rect x="740" y="149" width="1" height="1" fill="#9a9a9a"/><rect x="738" y="151" width="1" height="1" fill="#9a9a9a"/><rect x="740" y="151" width="1" height="1" fill="#9a9a9a"/><rect x="738" y="153" width="1" height="1" fill="#9a9a9a"/><rect x="740" y="153" width="1" height="1" fill="#9a9a9a"/><rect x="738" y="155" width="1" height="1" fill="#9a9a9a"/><rect x="740" y="155" width="1" height="1" fill="#9a9a9a"/><rect x="738" y="157" width="1" height="1" fill="#9a9a9a"/><rect x="740" y="157" width="1" height="1" fill="#9a9a9a"/><rect x="738" y="159" width="1" height="1" fill="#9a9a9a"/><rect x="740" y="159" width="1" height="1" fill="#9a9a9a"/><rect x="738" y="161" width="1" height="1" fill="#9a9a9a"/><rect x="740" y="161" width="1" height="1" fill="#9a9a9a"/><rect x="738" y="163" width="1" height="1" fill="#9a9a9a"/><rect x="740" y="163" width="1" height="1" fill="#9a9a9a"/><rect x="738" y="165" width="1" height="1" fill="#9a9a9a"/><rect x="740" y="165" width="1" height="1" fill="#9a9a9a"/><rect x="738" y="167" width="1" height="1" fill="#9a9a9a"/><rect x="740" y="167" width="1" height="1" fill="#9a9a9a"/><rect x="738" y="169" width="1" height="1" fill="#9a9a9a"/><rect x="740" y="169" width="1" height="1" fill="#9a9a9a"/></svg><svg style="left:875px;top:149px;" width="4" height="21" viewBox="875 149 4 21"><rect x="875" y="149" width="1" height="1" fill="#9a9a9a"/><rect x="877" y="149" width="1" height="1" fill="#9a9a9a"/><rect x="875" y="151" width="1" height="1" fill="#9a9a9a"/><rect x="877" y="151" width="1" height="1" fill="#9a9a9a"/><rect x="875" y="153" width="1" height="1" fill="#9a9a9a"/><rect x="877" y="153" width="1" height="1" fill="#9a9a9a"/><rect x="875" y="155" width="1" height="1" fill="#9a9a9a"/><rect x="877" y="155" width="1" height="1" fill="#9a9a9a"/><rect x="875" y="157" width="1" height="1" fill="#9a9a9a"/><rect x="877" y="157" width="1" height="1" fill="#9a9a9a"/><rect x="875" y="159" width="1" height="1" fill="#9a9a9a"/><rect x="877" y="159" width="1" height="1" fill="#9a9a9a"/><rect x="875" y="161" width="1" height="1" fill="#9a9a9a"/><rect x="877" y="161" width="1" height="1" fill="#9a9a9a"/><rect x="875" y="163" width="1" height="1" fill="#9a9a9a"/><rect x="877" y="163" width="1" height="1" fill="#9a9a9a"/><rect x="875" y="165" width="1" height="1" fill="#9a9a9a"/><rect x="877" y="165" width="1" height="1" fill="#9a9a9a"/><rect x="875" y="167" width="1" height="1" fill="#9a9a9a"/><rect x="877" y="167" width="1" height="1" fill="#9a9a9a"/><rect x="875" y="169" width="1" height="1" fill="#9a9a9a"/><rect x="877" y="169" width="1" height="1" fill="#9a9a9a"/></svg><svg style="left:1017px;top:149px;" width="4" height="21" viewBox="1017 149 4 21"><rect x="1017" y="149" width="1" height="1" fill="#9a9a9a"/><rect x="1019" y="149" width="1" height="1" fill="#9a9a9a"/><rect x="1017" y="151" width="1" height="1" fill="#9a9a9a"/><rect x="1019" y="151" width="1" height="1" fill="#9a9a9a"/><rect x="1017" y="153" width="1" height="1" fill="#9a9a9a"/><rect x="1019" y="153" width="1" height="1" fill="#9a9a9a"/><rect x="1017" y="155" width="1" height="1" fill="#9a9a9a"/><rect x="1019" y="155" width="1" height="1" fill="#9a9a9a"/><rect x="1017" y="157" width="1" height="1" fill="#9a9a9a"/><rect x="1019" y="157" width="1" height="1" fill="#9a9a9a"/><rect x="1017" y="159" width="1" height="1" fill="#9a9a9a"/><rect x="1019" y="159" width="1" height="1" fill="#9a9a9a"/><rect x="1017" y="161" width="1" height="1" fill="#9a9a9a"/><rect x="1019" y="161" width="1" height="1" fill="#9a9a9a"/><rect x="1017" y="163" width="1" height="1" fill="#9a9a9a"/><rect x="1019" y="163" width="1" height="1" fill="#9a9a9a"/><rect x="1017" y="165" width="1" height="1" fill="#9a9a9a"/><rect x="1019" y="165" width="1" height="1" fill="#9a9a9a"/><rect x="1017" y="167" width="1" height="1" fill="#9a9a9a"/><rect x="1019" y="167" width="1" height="1" fill="#9a9a9a"/><rect x="1017" y="169" width="1" height="1" fill="#9a9a9a"/><rect x="1019" y="169" width="1" height="1" fill="#9a9a9a"/></svg><svg style="left:1142px;top:149px;" width="4" height="21" viewBox="1142 149 4 21"><rect x="1142" y="149" width="1" height="1" fill="#9a9a9a"/><rect x="1144" y="149" width="1" height="1" fill="#9a9a9a"/><rect x="1142" y="151" width="1" height="1" fill="#9a9a9a"/><rect x="1144" y="151" width="1" height="1" fill="#9a9a9a"/><rect x="1142" y="153" width="1" height="1" fill="#9a9a9a"/><rect x="1144" y="153" width="1" height="1" fill="#9a9a9a"/><rect x="1142" y="155" width="1" height="1" fill="#9a9a9a"/><rect x="1144" y="155" width="1" height="1" fill="#9a9a9a"/><rect x="1142" y="157" width="1" height="1" fill="#9a9a9a"/><rect x="1144" y="157" width="1" height="1" fill="#9a9a9a"/><rect x="1142" y="159" width="1" height="1" fill="#9a9a9a"/><rect x="1144" y="159" width="1" height="1" fill="#9a9a9a"/><rect x="1142" y="161" width="1" height="1" fill="#9a9a9a"/><rect x="1144" y="161" width="1" height="1" fill="#9a9a9a"/><rect x="1142" y="163" width="1" height="1" fill="#9a9a9a"/><rect x="1144" y="163" width="1" height="1" fill="#9a9a9a"/><rect x="1142" y="165" width="1" height="1" fill="#9a9a9a"/><rect x="1144" y="165" width="1" height="1" fill="#9a9a9a"/><rect x="1142" y="167" width="1" height="1" fill="#9a9a9a"/><rect x="1144" y="167" width="1" height="1" fill="#9a9a9a"/><rect x="1142" y="169" width="1" height="1" fill="#9a9a9a"/><rect x="1144" y="169" width="1" height="1" fill="#9a9a9a"/></svg><svg style="left:1224px;top:149px;" width="4" height="21" viewBox="1224 149 4 21"><rect x="1224" y="149" width="1" height="1" fill="#9a9a9a"/><rect x="1226" y="149" width="1" height="1" fill="#9a9a9a"/><rect x="1224" y="151" width="1" height="1" fill="#9a9a9a"/><rect x="1226" y="151" width="1" height="1" fill="#9a9a9a"/><rect x="1224" y="153" width="1" height="1" fill="#9a9a9a"/><rect x="1226" y="153" width="1" height="1" fill="#9a9a9a"/><rect x="1224" y="155" width="1" height="1" fill="#9a9a9a"/><rect x="1226" y="155" width="1" height="1" fill="#9a9a9a"/><rect x="1224" y="157" width="1" height="1" fill="#9a9a9a"/><rect x="1226" y="157" width="1" height="1" fill="#9a9a9a"/><rect x="1224" y="159" width="1" height="1" fill="#9a9a9a"/><rect x="1226" y="159" width="1" height="1" fill="#9a9a9a"/><rect x="1224" y="161" width="1" height="1" fill="#9a9a9a"/><rect x="1226" y="161" width="1" height="1" fill="#9a9a9a"/><rect x="1224" y="163" width="1" height="1" fill="#9a9a9a"/><rect x="1226" y="163" width="1" height="1" fill="#9a9a9a"/><rect x="1224" y="165" width="1" height="1" fill="#9a9a9a"/><rect x="1226" y="165" width="1" height="1" fill="#9a9a9a"/><rect x="1224" y="167" width="1" height="1" fill="#9a9a9a"/><rect x="1226" y="167" width="1" height="1" fill="#9a9a9a"/><rect x="1224" y="169" width="1" height="1" fill="#9a9a9a"/><rect x="1226" y="169" width="1" height="1" fill="#9a9a9a"/></svg><div style="left:829px;top:148px;width:1px;height:22px;background:#3a3a3a"></div><svg style="left:748px;top:146px;" width="26" height="26" viewBox="748 146 26 26">
<defs><linearGradient id="prt" x1="0" y1="0" x2="0" y2="1"><stop offset="0" stop-color="#9a9a9a"/><stop offset="1" stop-color="#3c3c3c"/></linearGradient></defs>
<rect x="754" y="148" width="13" height="6" fill="#e8f2f8" stroke="#6a8fa8" stroke-width="0.8"/>
<rect x="750" y="153.5" width="21" height="9" rx="2" fill="url(#prt)"/>
<rect x="754" y="159" width="13" height="11" fill="#f4f8fb" stroke="#5e88a8" stroke-width="0.8"/>
<path d="M756,163 H765 M756,165.5 H765" stroke="#9ab0c0" stroke-width="0.7"/>
</svg><svg style="left:783px;top:145px;" width="40" height="26" viewBox="783 145 40 26">
<path d="M793,147.5 H801 L806,152.5 V168.5 H793 Z" fill="#f2f6fb" stroke="#6f9cd2" stroke-width="0.9"/>
<circle cx="790" cy="156" r="2.8" fill="#f0b070"/>
<path d="M785.8,165.5 V162.5 Q786,159.5 790,159.5 Q794,159.5 794.2,162.5 V165.5 Z" fill="#c83a6a"/>
<circle cx="797" cy="159.5" r="3" fill="#f5b27a" stroke="#d88a40" stroke-width="0.5"/>
<path d="M791.8,169.5 V166 Q792,163 797,163 Q802,163 802.2,166 V169.5 Z" fill="#3f86c9"/>
<path d="M814,158.2 H821 L817.5,162 Z" fill="#111"/>
</svg><svg style="left:835px;top:145px;" width="32" height="28" viewBox="835 145 32 28">
<path d="M847,149 H857 L862.5,154.5 V167 H847 Z" fill="#f6f6f6" stroke="#8a8a8a" stroke-width="0.9"/>
<rect x="848" y="151" width="9" height="3" fill="#8a8a8a"/>
<circle cx="845" cy="156" r="7" fill="#4d8fd0"/>
<circle cx="843.5" cy="154" r="4.5" fill="#8cc0ee" opacity="0.8"/>
<path d="M850.5,157 L852,160.5 L855.8,159.8 L854.2,163.2 L857.3,165.5 L853.6,166.5 L854,170.3 L850.5,168.5 L847,170.3 L847.4,166.5 L843.7,165.5 L846.8,163.2 L845.2,159.8 L849,160.5 Z" fill="#f2a310" stroke="#c87800" stroke-width="0.6"/>
</svg><svg style="left:884px;top:148px;" width="56" height="22" viewBox="884 148 56 22">
<defs><linearGradient id="arr" x1="0" y1="0" x2="0" y2="1"><stop offset="0" stop-color="#8cc4f4"/><stop offset="1" stop-color="#2d7dc8"/></linearGradient></defs>
<path d="M895.5,150 L905.3,159.6 H900.3 V167 H890.7 V159.6 H885.7 Z" fill="url(#arr)" stroke="#2466a8" stroke-width="0.8"/>
<path d="M925.3,167.5 L935.1,157.9 H930.1 V150.5 H920.5 V157.9 H915.5 Z" fill="url(#arr)" stroke="#2466a8" stroke-width="0.8"/>
</svg><svg style="left:1024px;top:148px;" width="46" height="20" viewBox="1024 148 46 20">
<defs><radialGradient id="zm" cx="0.4" cy="0.35" r="0.7"><stop offset="0" stop-color="#d8ecfc"/><stop offset="1" stop-color="#6aa6dc"/></radialGradient></defs>
<circle cx="1034" cy="158" r="6.8" fill="url(#zm)" stroke="#7aa8d4" stroke-width="0.8"/>
<rect x="1030.5" y="157.2" width="7" height="1.8" fill="#1f5fa8"/>
<circle cx="1059" cy="158" r="6.8" fill="url(#zm)" stroke="#7aa8d4" stroke-width="0.8"/>
<rect x="1055.5" y="157.2" width="7" height="1.8" fill="#1f5fa8"/><rect x="1058.1" y="154.6" width="1.8" height="7" fill="#1f5fa8"/>
</svg><svg style="left:1122px;top:155px;" width="10" height="8" viewBox="1122 155 10 8"><path d="M1124.5,158.3 H1129 L1126.75,161 Z" fill="#111"/></svg><svg style="left:1154px;top:146px;" width="60" height="26" viewBox="1154 146 60 26">
<rect x="1157" y="149.5" width="15" height="8" fill="#e8f0f8" stroke="#6a9acb" stroke-width="0.9"/>
<rect x="1157" y="158.5" width="15" height="9" fill="#d8e8f6" stroke="#6a9acb" stroke-width="0.9"/>
<path d="M1159,163 H1170 M1159,163 l2,-1.8 M1159,163 l2,1.8 M1170,163 l-2,-1.8 M1170,163 l-2,1.8" stroke="#2a6db8" stroke-width="0.9" fill="none"/>
<rect x="1193" y="149.5" width="15" height="18" fill="#e4eef8" stroke="#5a8cc4" stroke-width="0.9"/>
<path d="M1200.5,151.5 V156 M1200.5,151.5 l-1.6,1.8 M1200.5,151.5 l1.6,1.8 M1200.5,165.5 V161 M1200.5,165.5 l-1.6,-1.8 M1200.5,165.5 l1.6,-1.8 M1195,158.5 H1199 M1195,158.5 l1.8,-1.6 M1195,158.5 l1.8,1.6 M1206,158.5 H1202 M1206,158.5 l-1.8,-1.6 M1206,158.5 l-1.8,1.6" stroke="#2a6db8" stroke-width="0.8" fill="none"/>
</svg><svg style="left:1380px;top:155px;" width="10" height="8" viewBox="1380 155 10 8"><path d="M1382,158.3 H1388 L1385,161.3 Z" fill="#111"/></svg><svg style="left:879px;top:118px;" width="13" height="13" viewBox="879 118 13 13"><path d="M882,121.3 L889,128.3 M889,121.3 L882,128.3" stroke="#111" stroke-width="1.1"/></svg><svg style="left:1421px;top:39px;" width="19" height="31" viewBox="1421 39 19 31"><path d="M1431.5,51.5 L1443.5,63.5 M1443.5,51.5 L1431.5,63.5" stroke="#fff" stroke-width="2.8"/></svg><svg style="left:740px;top:188px;" width="26" height="30" viewBox="740 188 26 30">
<path d="M744.5,196 H752 V213.5 H744.5 Z" fill="#cfcfcf" stroke="#8a8a8a" stroke-width="0.6"/>
<path d="M748,192.2 H756.2 L761.4,197.4 V210.4 H748 Z" fill="#d2d2d2" stroke="#8a8a8a" stroke-width="0.6"/>
<path d="M756.2,192.2 V197.4 H761.4" fill="#e8e8e8" stroke="#8a8a8a" stroke-width="0.6"/>
<path d="M750.2,200.5 H759 M750.2,202.5 H759 M750.2,204.5 H759 M750.2,206.5 H759" stroke="#8a8a8a" stroke-width="0.6"/>
</svg><svg style="left:740px;top:833px;" width="30" height="32" viewBox="740 833 30 32">
<path d="M747.5,857 Q743.5,853 747.5,849 L758,838.5 Q761.5,835.5 763.8,838.5 Q766,841.5 763,844.5 L753.5,854 Q751.5,856 750,854.5 Q748.5,853 750.5,851 L758.5,843" stroke="#a8a8a8" stroke-width="1.7" fill="none" stroke-linecap="round"/>
</svg><div style="left:0;top:0;width:1440px;height:900px;clip-path:inset(178px 13px 28px 780px)"><div class="jl" style="left:842.5px;top:254.31px;width:249px;font:10.5px/10.5px 'Liberation Serif', serif;color:#000;text-shadow:0.35px 0 0 rgba(0,0,0,0.7);"><span>attribute</span><span>dependencies</span><span>in</span><span>the</span><span>two</span><span>schemes</span><span>are</span><span>not</span></div><div style="left:842.5px;top:265.81px;font:normal 10.5px/10.5px 'Liberation Serif', serif;color:#000;white-space:nowrap;text-shadow:0.35px 0 0 rgba(0,0,0,0.7);">conflicting:</div><div class="jl" style="left:865.6px;top:289.21px;width:226px;font:10.5px/10.5px 'Liberation Serif', serif;color:#000;text-shadow:0.35px 0 0 rgba(0,0,0,0.7);"><span>the</span><span>set</span><span>of</span><span>the</span><span>fact</span><span>attributes</span><span>in</span><span><i>H</i></span><span>is</span><span>the</span><span>union</span><span>of</span><span>the</span></div><div style="left:865.6px;top:300.68px;font:normal 10.5px/10.5px 'Liberation Serif', serif;color:#000;white-space:nowrap;text-shadow:0.35px 0 0 rgba(0,0,0,0.7);">sets in <i>F</i> and <i>G</i>;</div><div class="jl" style="left:865.6px;top:312.15px;width:226px;font:10.5px/10.5px 'Liberation Serif', serif;color:#000;text-shadow:0.35px 0 0 rgba(0,0,0,0.7);"><span>the</span><span>dimensions</span><span>in</span><span><i>H</i></span><span>are</span><span>the</span><span>intersection</span><span>of</span><span>those</span><span>in</span></div><div class="jl" style="left:865.6px;top:323.62px;width:226px;font:10.5px/10.5px 'Liberation Serif', serif;color:#000;text-shadow:0.35px 0 0 rgba(0,0,0,0.7);"><span><i>F</i></span><span>and</span><span><i>G</i>,</span><span>assuming</span><span>that</span><span>a</span><span>given</span><span>dimension</span><span>is</span></div><div class="jl" style="left:865.6px;top:335.09px;width:226px;font:10.5px/10.5px 'Liberation Serif', serif;color:#000;text-shadow:0.35px 0 0 rgba(0,0,0,0.7);"><span>common</span><span>to</span><span><i>F</i></span><span>and</span><span><i>G</i></span><span>if</span><span>at</span><span>least</span><span>one</span><span>dimension</span></div><div style="left:865.6px;top:346.56px;font:normal 10.5px/10.5px 'Liberation Serif', serif;color:#000;white-space:nowrap;text-shadow:0.35px 0 0 rgba(0,0,0,0.7);">attribute is shared.</div><div class="jl" style="left:865.6px;top:358.03px;width:226px;font:10.5px/10.5px 'Liberation Serif', serif;color:#000;text-shadow:0.35px 0 0 rgba(0,0,0,0.7);"><span>each</span><span>hierarchy</span><span>in</span><span><i>H</i></span><span>includes</span><span>all</span><span>and</span><span>only</span><span>the</span></div><div class="jl" style="left:865.6px;top:369.50px;width:226px;font:10.5px/10.5px 'Liberation Serif', serif;color:#000;text-shadow:0.35px 0 0 rgba(0,0,0,0.7);"><span>dimension</span><span>attributes</span><span>included</span><span>in</span><span>the</span><span>corresponding</span></div><div style="left:865.6px;top:380.97px;font:normal 10.5px/10.5px 'Liberation Serif', serif;color:#000;white-space:nowrap;text-shadow:0.35px 0 0 rgba(0,0,0,0.7);">hierarchies of both <i>F</i> and <i>G</i>.</div><div style="left:844px;top:292.7px;width:3px;height:3px;background:#111;border-radius:50%"></div><div style="left:844px;top:315.6px;width:3px;height:3px;background:#111;border-radius:50%"></div><div style="left:844px;top:361.5px;width:3px;height:3px;background:#111;border-radius:50%"></div><div class="jl" style="left:1117px;top:254.21px;width:249px;font:10.5px/10.5px 'Liberation Serif', serif;color:#000;text-shadow:0.35px 0 0 rgba(0,0,0,0.7);"><span>calculate</span><span>the</span><span>percentage</span><span>of</span><span>non-European</span><span>employees</span><span>for</span></div><div style="left:1117px;top:265.78px;font:normal 10.5px/10.5px 'Liberation Serif', serif;color:#000;white-space:nowrap;text-shadow:0.35px 0 0 rgba(0,0,0,0.7);">each city, job and year.</div><div class="jl" style="left:1129.4px;top:277.35px;width:236.6px;font:10.5px/10.5px 'Liberation Serif', serif;color:#000;text-shadow:0.35px 0 0 rgba(0,0,0,0.7);"><span>In</span><span>some</span><span>cases,</span><span>aggregation</span><span>along</span><span>a</span><span>dimension</span><span>can</span><span>be</span></div><div class="jl" style="left:1117px;top:288.92px;width:249px;font:10.5px/10.5px 'Liberation Serif', serif;color:#000;text-shadow:0.35px 0 0 rgba(0,0,0,0.7);"><span>carried</span><span>out</span><span>at</span><span>different</span><span>abstraction</span><span>levels</span><span>even</span><span>if</span><span>the</span></div><div class="jl" style="left:1117px;top:300.49px;width:249px;font:10.5px/10.5px 'Liberation Serif', serif;color:#000;text-shadow:0.35px 0 0 rgba(0,0,0,0.7);"><span>corresponding</span><span>dimension</span><span>attributes</span><span>were</span><span>not</span><span>explicitly</span></div><div class="jl" style="left:1117px;top:312.06px;width:249px;font:10.5px/10.5px 'Liberation Serif', serif;color:#000;text-shadow:0.35px 0 0 rgba(0,0,0,0.7);"><span>shown.</span><span>For</span><span>instance,</span><span>given</span><span>a</span><span><i>month</i></span><span>attribute</span><span>within</span><span>a</span></div><div class="jl" style="left:1117px;top:323.63px;width:249px;font:10.5px/10.5px 'Liberation Serif', serif;color:#000;text-shadow:0.35px 0 0 rgba(0,0,0,0.7);"><span>time</span><span>hierarchy,</span><span>fact</span><span>instances</span><span>can</span><span>be</span><span>aggregated</span><span>by</span><span>quarter,</span></div><div class="jl" style="left:1117px;top:335.20px;width:249px;font:10.5px/10.5px 'Liberation Serif', serif;color:#000;text-shadow:0.35px 0 0 rgba(0,0,0,0.7);"><span>semester</span><span>and</span><span>year</span><span>by</span><span>performing</span><span>a</span><span>simple</span><span>calculation.</span></div><div class="jl" style="left:1117px;top:346.77px;width:249px;font:10.5px/10.5px 'Liberation Serif', serif;color:#000;text-shadow:0.35px 0 0 rgba(0,0,0,0.7);"><span>Thus,</span><span>given</span><span>the</span><span>two</span><span>compatible</span><span>fact</span><span>schemes</span><span>in</span><span>Figure</span><span>3,</span></div><div class="jl" style="left:1117px;top:358.34px;width:249px;font:10.5px/10.5px 'Liberation Serif', serif;color:#000;text-shadow:0.35px 0 0 rgba(0,0,0,0.7);"><span>attribute</span><span><i>quarter</i></span><span>could</span><span>in</span><span>principle</span><span>be</span><span>added</span><span>to</span><span>the</span><span>time</span></div><div class="jl" style="left:1117px;top:369.91px;width:249px;font:10.5px/10.5px 'Liberation Serif', serif;color:#000;text-shadow:0.35px 0 0 rgba(0,0,0,0.7);"><span>dimension</span><span>in</span><span>the</span><span>resulting</span><span>scheme.</span><span>On</span><span>the</span><span>other</span><span>hand,</span><span>the</span></div><div class="jl" style="left:1117px;top:381.48px;width:249px;font:10.5px/10.5px 'Liberation Serif', serif;color:#000;text-shadow:0.35px 0 0 rgba(0,0,0,0.7);"><span>designer</span><span>must</span><span>keep</span><span>in</span><span>mind</span><span>that,</span><span>by</span><span>adopting</span><span>this</span></div><div class="jl" style="left:1117px;top:393.05px;width:249px;font:10.5px/10.5px 'Liberation Serif', serif;color:#000;text-shadow:0.35px 0 0 rgba(0,0,0,0.7);"><span>solution,</span><span>the</span><span>time</span><span>for</span><span>extracting</span><span>data</span><span>by</span><span>quarter</span><span>will</span></div><div class="jl" style="left:1117px;top:404.62px;width:249px;font:10.5px/10.5px 'Liberation Serif', serif;color:#000;text-shadow:0.35px 0 0 rgba(0,0,0,0.7);"><span>increase</span><span>significantly;</span><span>thus,</span><span>the</span><span>best</span><span>solution</span><span>would</span></div><div class="jl" style="left:1117px;top:416.19px;width:249px;font:10.5px/10.5px 'Liberation Serif', serif;color:#000;text-shadow:0.35px 0 0 rgba(0,0,0,0.7);"><span>probably</span><span>be</span><span>to</span><span>add</span><span>explicitly</span><span>the</span><span><i>quarter</i></span><span>attribute</span><span>to</span><span>the</span></div><div style="left:1117px;top:427.76px;font:normal 10.5px/10.5px 'Liberation Serif', serif;color:#000;white-space:nowrap;text-shadow:0.35px 0 0 rgba(0,0,0,0.7);">time hierarchy in the employee fact scheme.</div><div style="left:1117px;top:450.58px;font:bold 12.2px/12.2px 'Liberation Serif', serif;color:#000;white-space:nowrap;letter-spacing:-0.171px;">3.3. Representing query patterns on a fact</div><div style="left:1117px;top:461.38px;font:bold 12.2px/12.2px 'Liberation Serif', serif;color:#000;white-space:nowrap;">scheme</div><div class="jl" style="left:1129.4px;top:488.81px;width:236.6px;font:10.5px/10.5px 'Liberation Serif', serif;color:#000;text-shadow:0.35px 0 0 rgba(0,0,0,0.7);"><span>The</span><span>basic</span><span>OLAP</span><span>operators</span><span>for</span><span>formulating</span><span>typical</span></div><div class="jl" style="left:1117px;top:500.41px;width:249px;font:10.5px/10.5px 'Liberation Serif', serif;color:#000;text-shadow:0.35px 0 0 rgba(0,0,0,0.7);"><span>queries</span><span>on</span><span>DWs</span><span>are</span><span>roll-up,</span><span>drill</span><span>down,</span><span>drill</span><span>across</span><span>and</span></div><div class="jl" style="left:1117px;top:512.01px;width:249px;font:10.5px/10.5px 'Liberation Serif', serif;color:#000;text-shadow:0.35px 0 0 rgba(0,0,0,0.7);"><span>slice-and-dice;</span><span>they</span><span>are</span><span>used,</span><span>respectively,</span><span>to</span><span>aggregate</span><span>fact</span></div><div class="jl" style="left:1117px;top:523.61px;width:249px;font:10.5px/10.5px 'Liberation Serif', serif;color:#000;text-shadow:0.35px 0 0 rgba(0,0,0,0.7);"><span>attributes</span><span>in</span><span>order</span><span>to</span><span>view</span><span>data</span><span>at</span><span>a</span><span>higher</span><span>level</span><span>of</span></div><div class="jl" style="left:1117px;top:535.21px;width:249px;font:10.5px/10.5px 'Liberation Serif', serif;color:#000;text-shadow:0.35px 0 0 rgba(0,0,0,0.7);"><span>abstraction,</span><span>disaggregate</span><span>fact</span><span>attributes</span><span>in</span><span>order</span><span>to</span></div><div class="jl" style="left:1117px;top:546.81px;width:249px;font:10.5px/10.5px 'Liberation Serif', serif;color:#000;text-shadow:0.35px 0 0 rgba(0,0,0,0.7);"><span>introduce</span><span>further</span><span>detail,</span><span>relate</span><span>and</span><span>compare</span><span>distinct</span><span>facts,</span></div><div class="jl" style="left:1117px;top:558.41px;width:249px;font:10.5px/10.5px 'Liberation Serif', serif;color:#000;text-shadow:0.35px 0 0 rgba(0,0,0,0.7);"><span>select</span><span>and</span><span>project</span><span>facts</span><span>so</span><span>as</span><span>to</span><span>reduce</span><span>their</span><span>dimensionality</span></div><div style="left:1117px;top:570.01px;font:normal 10.5px/10.5px 'Liberation Serif', serif;color:#000;white-space:nowrap;text-shadow:0.35px 0 0 rgba(0,0,0,0.7);">[2].</div><div class="jl" style="left:1129.4px;top:581.61px;width:236.6px;font:10.5px/10.5px 'Liberation Serif', serif;color:#000;text-shadow:0.35px 0 0 rgba(0,0,0,0.7);"><span>On</span><span>a</span><span>fact</span><span>scheme,</span><span>a</span><span>query</span><span>may</span><span>be</span><span>represented</span><span>by</span><span>a</span></div><div class="jl" style="left:1117px;top:593.21px;width:249px;font:10.5px/10.5px 'Liberation Serif', serif;color:#000;text-shadow:0.35px 0 0 rgba(0,0,0,0.7);"><span><i>query</i></span><span><i>pattern</i>,</span><span>which</span><span>consists</span><span>in</span><span>a</span><span>set</span><span>of</span><span>markers</span><span>placed</span><span>on</span></div><div class="jl" style="left:1117px;top:604.81px;width:249px;font:10.5px/10.5px 'Liberation Serif', serif;color:#000;text-shadow:0.35px 0 0 rgba(0,0,0,0.7);"><span>the</span><span>dimension</span><span>attributes.</span><span>One</span><span>or</span><span>more</span><span>markers</span><span>can</span><span>be</span></div><div class="jl" style="left:1117px;top:616.41px;width:249px;font:10.5px/10.5px 'Liberation Serif', serif;color:#000;text-shadow:0.35px 0 0 rgba(0,0,0,0.7);"><span>placed</span><span>within</span><span>each</span><span>hierarchy,</span><span>to</span><span>indicate</span><span>at</span><span>what</span><span>level(s)</span></div><div class="jl" style="left:1117px;top:628.01px;width:249px;font:10.5px/10.5px 'Liberation Serif', serif;color:#000;text-shadow:0.35px 0 0 rgba(0,0,0,0.7);"><span>fact</span><span>instances</span><span>must</span><span>be</span><span>aggregated.</span><span>A</span><span>dimension</span><span>may</span><span>also</span></div><div class="jl" style="left:1117px;top:639.61px;width:249px;font:10.5px/10.5px 'Liberation Serif', serif;color:#000;text-shadow:0.35px 0 0 rgba(0,0,0,0.7);"><span>contain</span><span>no</span><span>markers,</span><span>to</span><span>indicate</span><span>that</span><span>none</span><span>of</span><span>its</span><span>attributes</span></div><div class="jl" style="left:1117px;top:651.21px;width:249px;font:10.5px/10.5px 'Liberation Serif', serif;color:#000;text-shadow:0.35px 0 0 rgba(0,0,0,0.7);"><span>is</span><span>involved</span><span>in</span><span>the</span><span>query.</span><span>Non-dimension</span><span>attributes</span><span>need</span></div><div style="left:1117px;top:662.81px;font:normal 10.5px/10.5px 'Liberation Serif', serif;color:#000;white-space:nowrap;text-shadow:0.35px 0 0 rgba(0,0,0,0.7);">not be shown on the query pattern.</div><div class="jl" style="left:1129.4px;top:674.41px;width:236.6px;font:10.5px/10.5px 'Liberation Serif', serif;color:#000;text-shadow:0.35px 0 0 rgba(0,0,0,0.7);"><span>The</span><span>data</span><span>shown</span><span>as</span><span>a</span><span>result</span><span>of</span><span>a</span><span>query</span><span>may</span><span>be</span><span>any</span></div><div class="jl" style="left:1117px;top:686.01px;width:249px;font:10.5px/10.5px 'Liberation Serif', serif;color:#000;text-shadow:0.35px 0 0 rgba(0,0,0,0.7);"><span>combination</span><span>of</span><span>fact</span><span>attributes,</span><span>and/or</span><span>the</span><span>result</span><span>of</span><span>any</span></div><div class="jl" style="left:1117px;top:697.61px;width:249px;font:10.5px/10.5px 'Liberation Serif', serif;color:#000;text-shadow:0.35px 0 0 rgba(0,0,0,0.7);"><span>computation</span><span>made</span><span>on</span><span>them.</span><span>Figure</span><span>4</span><span>shows</span><span>the</span><span>query</span></div><div class="jl" style="left:1117px;top:709.21px;width:249px;font:10.5px/10.5px 'Liberation Serif', serif;color:#000;text-shadow:0.35px 0 0 rgba(0,0,0,0.7);"><span>pattern</span><span>representing</span><span>the</span><span>following</span><span>query:</span><span>&quot;<i>total</i></span><span><i>quantity</i></span></div><div class="jl" style="left:1117px;top:720.81px;width:249px;font:10.5px/10.5px 'Liberation Serif', serif;color:#000;text-shadow:0.35px 0 0 rgba(0,0,0,0.7);"><span><i>sold</i></span><span><i>and</i></span><span><i>average</i></span><span><i>returns</i></span><span><i>per</i></span><span><i>unit</i></span><span><i>sold</i></span><span><i>for</i></span><span><i>each</i></span><span><i>week</i></span><span><i>and</i></span><span><i>for</i></span></div><div class="jl" style="left:1117px;top:732.41px;width:249px;font:10.5px/10.5px 'Liberation Serif', serif;color:#000;text-shadow:0.35px 0 0 rgba(0,0,0,0.7);"><span><i>each</i></span><span><i>type</i></span><span><i>of</i></span><span><i>product</i>&quot;.</span><span>The</span><span>average</span><span>returns</span><span>per</span><span>unit</span><span>sold</span><span>is</span></div><div style="left:1117px;top:744.01px;font:normal 10.5px/10.5px 'Liberation Serif', serif;color:#000;white-space:nowrap;text-shadow:0.35px 0 0 rgba(0,0,0,0.7);">the ratio between the total returns and the quantity sold.</div><div class="jl" style="left:856.0px;top:824.01px;width:235.5px;font:10.5px/10.5px 'Liberation Serif', serif;color:#000;text-shadow:0.35px 0 0 rgba(0,0,0,0.7);"><span>Consider</span><span>the</span><span>two</span><span>fact</span><span>schemes</span><span>in</span><span>Figures</span><span>3.a</span><span>and</span><span>3.b:</span></div><div class="jl" style="left:842.5px;top:835.61px;width:249px;font:10.5px/10.5px 'Liberation Serif', serif;color:#000;text-shadow:0.35px 0 0 rgba(0,0,0,0.7);"><span>the</span><span>first</span><span>represents</span><span>all</span><span>employees</span><span>of</span><span>an</span><span>enterprise,</span><span>the</span></div><div class="jl" style="left:842.5px;top:847.21px;width:249px;font:10.5px/10.5px 'Liberation Serif', serif;color:#000;text-shadow:0.35px 0 0 rgba(0,0,0,0.7);"><span>second</span><span>only</span><span>the</span><span>non-European</span><span>employees.</span><span>Although</span><span>these</span></div><div class="jl" style="left:842.5px;top:858.81px;width:249px;font:10.5px/10.5px 'Liberation Serif', serif;color:#000;text-shadow:0.35px 0 0 rgba(0,0,0,0.7);"><span>schemes</span><span>are</span><span>aimed</span><span>at</span><span>extracting</span><span>different</span><span>information,</span><span>they</span></div><div class="jl" style="left:842.5px;top:870.41px;width:249px;font:10.5px/10.5px 'Liberation Serif', serif;color:#000;text-shadow:0.35px 0 0 rgba(0,0,0,0.7);"><span>are</span><span>compatible,</span><span>in</span><span>fact</span><span>the</span><span>only</span><span>overlapping</span><span>attributes</span><span>are</span></div><svg style="left:780px;top:178px" width="647" height="694" viewBox="780 178 647 694"><line x1="949.75" y1="410.4" x2="949.75" y2="438.3" stroke="#000" stroke-width="1.1"/><line x1="859.9" y1="461.1" x2="883.3" y2="461.1" stroke="#000" stroke-width="1.1"/><line x1="889.3" y1="461.1" x2="916.3" y2="461.1" stroke="#000" stroke-width="1.1"/><line x1="981.5" y1="462.4" x2="1009.3" y2="462.4" stroke="#000" stroke-width="1.1"/><line x1="1015.3" y1="462.4" x2="1040" y2="462.4" stroke="#000" stroke-width="1.1"/><line x1="1046" y1="462.4" x2="1069.6" y2="462.4" stroke="#000" stroke-width="1.1"/><polyline points="952.5,408.5 990.6,422.4 990.6,471.8 983.1,479.3" fill="none" stroke="#000" stroke-width="1" stroke-dasharray="3,2"/><polyline points="1010.5,464.8 995,479.9 983.1,479.9" fill="none" stroke="#000" stroke-width="1" stroke-dasharray="3,2"/><polyline points="889,462 915,466.8" fill="none" stroke="#000" stroke-width="1" stroke-dasharray="3,2"/><polyline points="884.4,464 884.4,479.9 915,479.9" fill="none" stroke="#000" stroke-width="1" stroke-dasharray="3,2"/><rect x="916.3" y="438.3" width="65.2" height="47.2" fill="#fff" stroke="#000" stroke-width="1.1"/><line x1="915" y1="458.6" x2="984" y2="458.6" stroke="#000" stroke-width="1.1"/><circle cx="949.75" cy="407.4" r="3" fill="#fff" stroke="#000" stroke-width="1.1"/><circle cx="856.9" cy="461.1" r="3" fill="#fff" stroke="#000" stroke-width="1.1"/><circle cx="886.25" cy="461.1" r="3" fill="#fff" stroke="#000" stroke-width="1.1"/><circle cx="1012.25" cy="462.4" r="3" fill="#fff" stroke="#000" stroke-width="1.1"/><circle cx="1043" cy="462.4" r="3" fill="#fff" stroke="#000" stroke-width="1.1"/><circle cx="1072.6" cy="462.4" r="3" fill="#fff" stroke="#000" stroke-width="1.1"/><text x="946" y="410.5" font-family="Liberation Serif" font-size="9.5" font-weight="normal" text-anchor="end" fill="#000" style="">job</text><text x="976.9" y="414.9" font-family="Liberation Serif" font-size="9.5" font-weight="normal" text-anchor="start" fill="#000" textLength="22.5" lengthAdjust="spacing" style="">MAX</text><text x="923" y="452.6" font-family="Liberation Serif" font-size="9.5" font-weight="normal" text-anchor="start" fill="#000" textLength="56" lengthAdjust="spacing" style="">EMPLOYEES</text><text x="919.5" y="469.9" font-family="Liberation Serif" font-size="9.5" font-weight="normal" text-anchor="start" fill="#000" textLength="60" lengthAdjust="spacing" style="">number of emp.</text><text x="919.5" y="480.5" font-family="Liberation Serif" font-size="9.5" font-weight="normal" text-anchor="start" fill="#000" style="">max. salary</text><text x="857" y="471.1" font-family="Liberation Serif" font-size="9.5" font-weight="normal" text-anchor="middle" fill="#000" style="">year</text><text x="874.6" y="456.5" font-family="Liberation Serif" font-size="9.5" font-weight="normal" text-anchor="start" fill="#000" textLength="24" lengthAdjust="spacing" style="">month</text><text x="997" y="456.5" font-family="Liberation Serif" font-size="9.5" font-weight="normal" text-anchor="start" fill="#000" textLength="18" lengthAdjust="spacing" style="">store</text><text x="1043" y="475.7" font-family="Liberation Serif" font-size="9.5" font-weight="normal" text-anchor="middle" fill="#000" style="">city</text><text x="1075" y="475.7" font-family="Liberation Serif" font-size="9.5" font-weight="normal" text-anchor="middle" fill="#000" style="">state</text><text x="893.75" y="476.5" font-family="Liberation Serif" font-size="9.5" font-weight="normal" text-anchor="start" fill="#000" textLength="20.3" lengthAdjust="spacing" style="">AVG</text><text x="890.6" y="491.1" font-family="Liberation Serif" font-size="9.5" font-weight="normal" text-anchor="start" fill="#000" textLength="22" lengthAdjust="spacing" style="">MAX</text><text x="991.9" y="489.25" font-family="Liberation Serif" font-size="9.5" font-weight="normal" text-anchor="start" fill="#000" textLength="22" lengthAdjust="spacing" style="">MAX</text><text x="966.9" y="502.4" font-family="Liberation Sans" font-size="8.2" font-weight="normal" text-anchor="middle" fill="#000" style="">(a)</text><line x1="997.55" y1="524.2" x2="997.55" y2="549.3" stroke="#000" stroke-width="1.1"/><line x1="997.55" y1="555.3" x2="997.55" y2="582.6" stroke="#000" stroke-width="1.1"/><line x1="931.8" y1="555.3" x2="931.8" y2="582.6" stroke="#000" stroke-width="1.1"/><line x1="931.8" y1="621.3" x2="931.8" y2="647.3" stroke="#000" stroke-width="1.1"/><line x1="997.55" y1="621.3" x2="997.55" y2="647.3" stroke="#000" stroke-width="1.1"/><line x1="869.55" y1="604.8" x2="892.5" y2="604.8" stroke="#000" stroke-width="1.1"/><line x1="898.5" y1="604.8" x2="925.6" y2="604.8" stroke="#000" stroke-width="1.1"/><line x1="1003.4" y1="606.2" x2="1031.5" y2="606.2" stroke="#000" stroke-width="1.1"/><line x1="1037.5" y1="606.2" x2="1061.2" y2="606.2" stroke="#000" stroke-width="1.1"/><polyline points="898,606.3 925.6,612.4" fill="none" stroke="#000" stroke-width="1" stroke-dasharray="3,2"/><rect x="925.6" y="582.6" width="77.8" height="38.7" fill="#fff" stroke="#000" stroke-width="1.1"/><circle cx="997.55" cy="521.2" r="3" fill="#fff" stroke="#000" stroke-width="1.1"/><circle cx="997.55" cy="552.3" r="3" fill="#fff" stroke="#000" stroke-width="1.1"/><circle cx="931.8" cy="552.3" r="3" fill="#fff" stroke="#000" stroke-width="1.1"/><circle cx="866.55" cy="604.8" r="3" fill="#fff" stroke="#000" stroke-width="1.1"/><circle cx="895.5" cy="604.8" r="3" fill="#fff" stroke="#000" stroke-width="1.1"/><circle cx="1034.5" cy="606.2" r="3" fill="#fff" stroke="#000" stroke-width="1.1"/><circle cx="1064.2" cy="606.2" r="3" fill="#fff" stroke="#000" stroke-width="1.1"/><circle cx="931.8" cy="650.3" r="3" fill="#fff" stroke="#000" stroke-width="1.1"/><circle cx="997.55" cy="650.3" r="3" fill="#fff" stroke="#000" stroke-width="1.1"/><text x="991.9" y="524.1" font-family="Liberation Serif" font-size="9.5" font-weight="normal" text-anchor="end" fill="#000" style="">continent</text><text x="925" y="555" font-family="Liberation Serif" font-size="9.5" font-weight="normal" text-anchor="end" fill="#000" style="">job</text><text x="992" y="553.8" font-family="Liberation Serif" font-size="9.5" font-weight="normal" text-anchor="end" fill="#000" style="">nation</text><text x="896" y="600.5" font-family="Liberation Serif" font-size="9.5" font-weight="normal" text-anchor="middle" fill="#000" style="">quarter</text><text x="866" y="615.1" font-family="Liberation Serif" font-size="9.5" font-weight="normal" text-anchor="middle" fill="#000" style="">year</text><text x="924" y="620.4" font-family="Liberation Serif" font-size="9.5" font-weight="normal" text-anchor="end" fill="#000" style="">AVG</text><text x="964.5" y="592.3" font-family="Liberation Serif" font-size="9.5" font-weight="normal" text-anchor="middle" fill="#000" textLength="75" lengthAdjust="spacing" style="">NON-EUROPEAN</text><text x="964.5" y="602.6" font-family="Liberation Serif" font-size="9.5" font-weight="normal" text-anchor="middle" fill="#000" style="">EMPLOYEES</text><text x="929.6" y="615.1" font-family="Liberation Serif" font-size="9.5" font-weight="normal" text-anchor="start" fill="#000" textLength="60.4" lengthAdjust="spacing" style="">number of emp.</text><text x="1034" y="619.5" font-family="Liberation Serif" font-size="9.5" font-weight="normal" text-anchor="middle" fill="#000" style="">city</text><text x="1067.4" y="619.5" font-family="Liberation Serif" font-size="9.5" font-weight="normal" text-anchor="middle" fill="#000" style="">state</text><text x="925" y="651" font-family="Liberation Serif" font-size="9.5" font-weight="normal" text-anchor="end" fill="#000" style="">sex</text><text x="982.6" y="645.3" font-family="Liberation Serif" font-size="9.5" font-weight="normal" text-anchor="middle" fill="#000" style="">age</text><text x="992" y="655.1" font-family="Liberation Serif" font-size="9.5" font-weight="normal" text-anchor="end" fill="#000" style="">range</text><text x="966.6" y="666.6" font-family="Liberation Sans" font-size="8.2" font-weight="normal" text-anchor="middle" fill="#000" style="">(b)</text><line x1="925.6" y1="603.5" x2="1005" y2="603.5" stroke="#000" stroke-width="1.1"/><line x1="951.1" y1="688.1" x2="951.1" y2="715.3" stroke="#000" stroke-width="1.1"/><line x1="876.3" y1="738.5" x2="903.3" y2="738.5" stroke="#000" stroke-width="1.1"/><line x1="996.7" y1="739.6" x2="1023" y2="739.6" stroke="#000" stroke-width="1.1"/><line x1="1029" y1="739.6" x2="1053.5" y2="739.6" stroke="#000" stroke-width="1.1"/><polyline points="954,686 1004.4,704.7 1004.4,746.7 998.7,752" fill="none" stroke="#000" stroke-width="1" stroke-dasharray="3,2"/><polyline points="1024,742 1006.7,756 998.7,756" fill="none" stroke="#000" stroke-width="1" stroke-dasharray="3,2"/><polyline points="876,740 903,744" fill="none" stroke="#000" stroke-width="1" stroke-dasharray="3,2"/><polyline points="875,741 883.3,756 903,756" fill="none" stroke="#000" stroke-width="1" stroke-dasharray="3,2"/><polyline points="871.3,742 871.3,767.3 903,767.3" fill="none" stroke="#000" stroke-width="1" stroke-dasharray="3,2"/><rect x="903.3" y="715.3" width="93.4" height="60" fill="#fff" stroke="#000" stroke-width="1.1"/><line x1="900" y1="735.3" x2="999" y2="735.3" stroke="#000" stroke-width="1.1"/><circle cx="951.1" cy="685.1" r="3" fill="#fff" stroke="#000" stroke-width="1.1"/><circle cx="873.3" cy="738.7" r="3" fill="#fff" stroke="#000" stroke-width="1.1"/><circle cx="1026" cy="739.6" r="3" fill="#fff" stroke="#000" stroke-width="1.1"/><circle cx="1056.5" cy="739.6" r="3" fill="#fff" stroke="#000" stroke-width="1.1"/><text x="948" y="688.3" font-family="Liberation Serif" font-size="9.5" font-weight="normal" text-anchor="end" fill="#000" style="">job</text><text x="979.3" y="693.7" font-family="Liberation Serif" font-size="9.5" font-weight="normal" text-anchor="start" fill="#000" textLength="22.3" lengthAdjust="spacing" style="">MAX</text><text x="873.5" y="733.3" font-family="Liberation Serif" font-size="9.5" font-weight="normal" text-anchor="middle" fill="#000" style="">year</text><text x="914" y="730.7" font-family="Liberation Serif" font-size="9.5" font-weight="normal" text-anchor="start" fill="#000" textLength="76" lengthAdjust="spacing" style="">ALL EMPLOYEES</text><text x="907" y="747.3" font-family="Liberation Serif" font-size="9.5" font-weight="normal" text-anchor="start" fill="#000" style="">number of emp.</text><text x="907" y="757.3" font-family="Liberation Serif" font-size="9.5" font-weight="normal" text-anchor="start" fill="#000" style="">max salary of emp.</text><text x="907" y="768.3" font-family="Liberation Serif" font-size="9.5" font-weight="normal" text-anchor="start" fill="#000" textLength="87" lengthAdjust="spacing" style="">numb. of non-eur. emp.</text><text x="881.3" y="753.3" font-family="Liberation Serif" font-size="9.5" font-weight="normal" text-anchor="start" fill="#000" textLength="20" lengthAdjust="spacing" style="">AVG</text><text x="877" y="765.3" font-family="Liberation Serif" font-size="9.5" font-weight="normal" text-anchor="start" fill="#000" textLength="23" lengthAdjust="spacing" style="">MAX</text><text x="874.7" y="777.3" font-family="Liberation Serif" font-size="9.5" font-weight="normal" text-anchor="start" fill="#000" textLength="20.6" lengthAdjust="spacing" style="">AVG</text><text x="1027" y="752" font-family="Liberation Serif" font-size="9.5" font-weight="normal" text-anchor="middle" fill="#000" style="">city</text><text x="1050" y="752" font-family="Liberation Serif" font-size="9.5" font-weight="normal" text-anchor="start" fill="#000" style="">state</text><text x="1000" y="765.3" font-family="Liberation Serif" font-size="9.5" font-weight="normal" text-anchor="start" fill="#000" textLength="23" lengthAdjust="spacing" style="">MAX</text><text x="966.7" y="790.4" font-family="Liberation Sans" font-size="8.2" font-weight="normal" text-anchor="middle" fill="#000" style="">(c)</text><text x="878.8" y="807.9" font-family="Liberation Sans" font-size="10.9" font-weight="bold" text-anchor="start" fill="#000" textLength="33.2" lengthAdjust="spacing" style="">Figure</text><text x="920.8" y="807.9" font-family="Liberation Sans" font-size="10.9" font-weight="bold" text-anchor="start" fill="#000" textLength="8.2" lengthAdjust="spacing" style="">3.</text><text x="938.4" y="807.9" font-family="Liberation Sans" font-size="10.9" font-weight="bold" text-anchor="start" fill="#000" textLength="41.3" lengthAdjust="spacing" style="">Scheme</text><text x="988.5" y="807.9" font-family="Liberation Sans" font-size="10.9" font-weight="bold" text-anchor="start" fill="#000" textLength="66.3" lengthAdjust="spacing" style="">overlapping.</text><line x1="1223.5" y1="808.3" x2="1211.8" y2="792" stroke="#000" stroke-width="1.1"/><line x1="1227" y1="808.3" x2="1240.9" y2="789.4" stroke="#000" stroke-width="1.1"/><line x1="1240.9" y1="789.4" x2="1254" y2="771.5" stroke="#000" stroke-width="1.1"/><line x1="1225.2" y1="814" x2="1225.2" y2="840.3" stroke="#000" stroke-width="1.1"/><line x1="1135" y1="864.1" x2="1192.5" y2="864.1" stroke="#000" stroke-width="1.1"/><line x1="1258.6" y1="865" x2="1285.8" y2="865" stroke="#000" stroke-width="1.1"/><line x1="1291.8" y1="865" x2="1315.6" y2="865" stroke="#000" stroke-width="1.1"/><line x1="1321.6" y1="865" x2="1346.3" y2="865" stroke="#000" stroke-width="1.1"/><line x1="1290.8" y1="862.5" x2="1311" y2="844" stroke="#000" stroke-width="1.1"/><rect x="1192.5" y="840.3" width="66.1" height="40" fill="#fff" stroke="#000" stroke-width="1.1"/><line x1="1192.5" y1="861.6" x2="1258.6" y2="861.6" stroke="#000" stroke-width="1.1"/><circle cx="1255.9" cy="769" r="3" fill="#fff" stroke="#000" stroke-width="1.1"/><circle cx="1210.2" cy="789.4" r="3" fill="#fff" stroke="#000" stroke-width="1.1"/><circle cx="1240.9" cy="789.4" r="3.3" fill="#000" stroke="#000" stroke-width="1.1"/><circle cx="1225.2" cy="811" r="3" fill="#fff" stroke="#000" stroke-width="1.1"/><circle cx="1313.1" cy="841.7" r="3" fill="#fff" stroke="#000" stroke-width="1.1"/><circle cx="1288.8" cy="865" r="3" fill="#fff" stroke="#000" stroke-width="1.1"/><circle cx="1318.6" cy="865" r="3" fill="#fff" stroke="#000" stroke-width="1.1"/><circle cx="1349.3" cy="865" r="3" fill="#fff" stroke="#000" stroke-width="1.1"/><circle cx="1132" cy="864.1" r="3" fill="#fff" stroke="#000" stroke-width="1.1"/><circle cx="1162.7" cy="864.1" r="3.3" fill="#000" stroke="#000" stroke-width="1.1"/><text x="1254.5" y="779.8" font-family="Liberation Serif" font-size="9.5" font-weight="normal" text-anchor="start" fill="#000" textLength="32.5" lengthAdjust="spacing" style="">category</text><text x="1207" y="790.6" font-family="Liberation Serif" font-size="9.5" font-weight="normal" text-anchor="end" fill="#000" style="">manufacturer</text><text x="1220.5" y="787" font-family="Liberation Serif" font-size="9.5" font-weight="normal" text-anchor="start" fill="#000" style="">type</text><text x="1219" y="814.1" font-family="Liberation Serif" font-size="9.5" font-weight="normal" text-anchor="end" fill="#000" style="">product</text><text x="1286" y="836.7" font-family="Liberation Serif" font-size="9.5" font-weight="normal" text-anchor="start" fill="#000" textLength="54" lengthAdjust="spacing" style="">sales manager</text><text x="1226" y="856.5" font-family="Liberation Serif" font-size="9.5" font-weight="normal" text-anchor="middle" fill="#000" style="">SALE</text><text x="1196" y="874.5" font-family="Liberation Serif" font-size="9.5" font-weight="normal" text-anchor="start" fill="#000" style="">qty sold</text><text x="1121" y="876" font-family="Liberation Serif" font-size="9.5" font-weight="normal" text-anchor="start" fill="#000" style="">month</text><text x="1152" y="876" font-family="Liberation Serif" font-size="9.5" font-weight="normal" text-anchor="start" fill="#000" style="">week</text></svg></div>
</body></html>
